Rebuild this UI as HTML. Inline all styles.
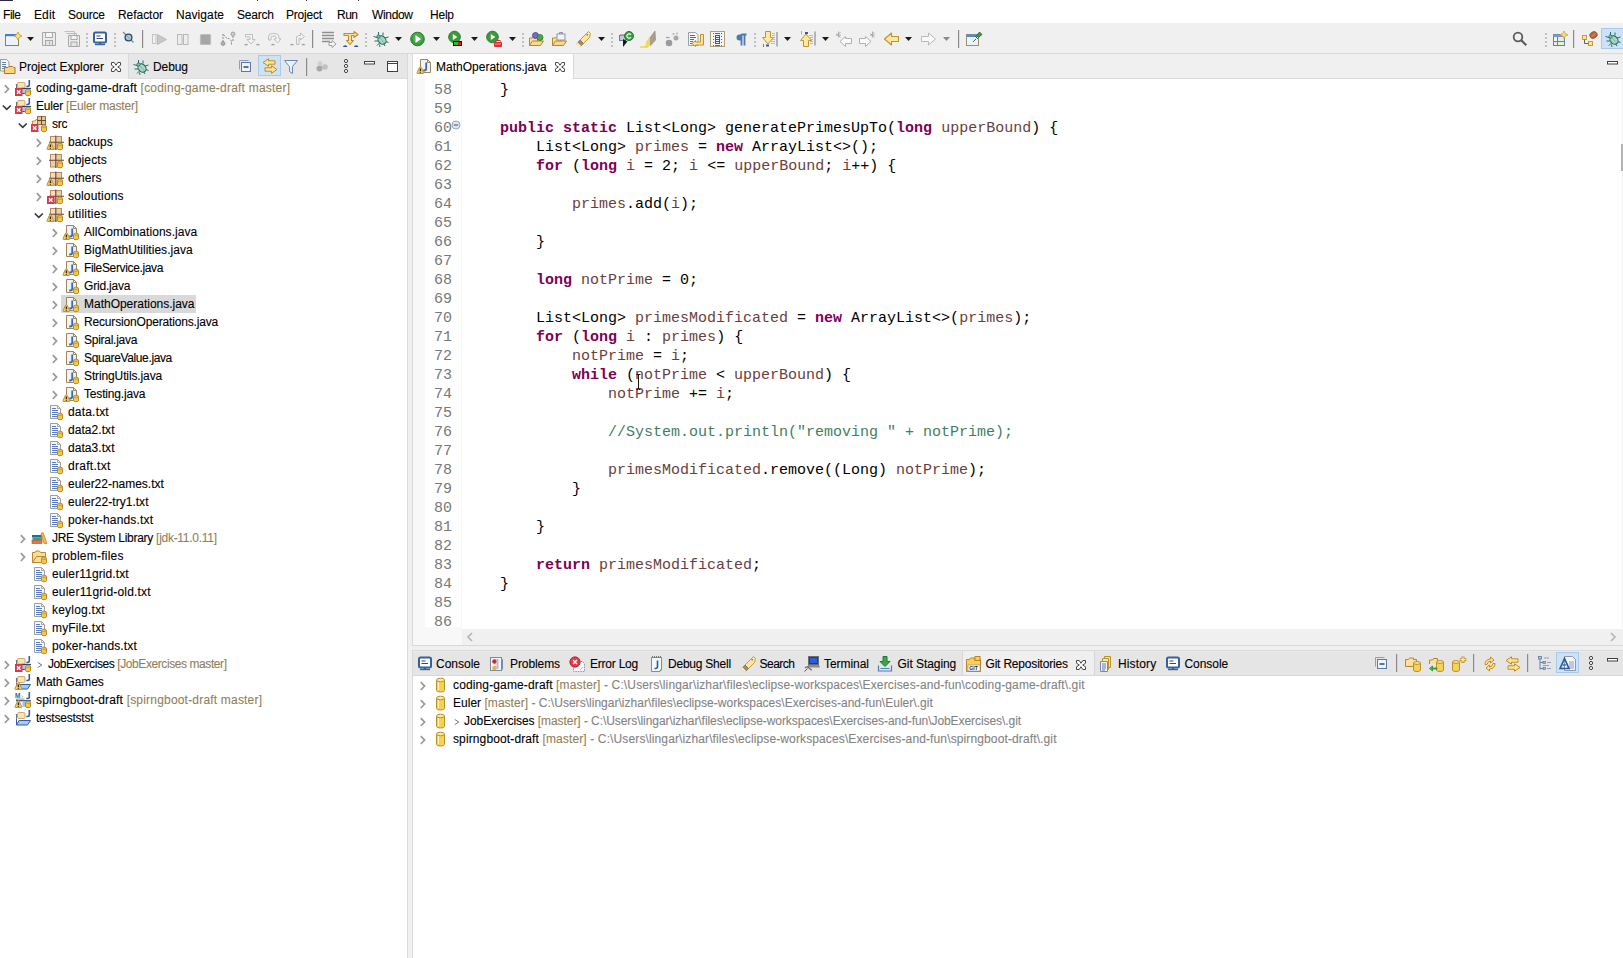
<!DOCTYPE html><html><head><meta charset="utf-8"><style>
*{margin:0;padding:0;box-sizing:border-box}
html,body{width:1623px;height:958px;overflow:hidden;background:#fff;font-family:"Liberation Sans",sans-serif;font-size:12px;color:#000}
.a{position:absolute}
.t{position:absolute;white-space:pre;line-height:18px;height:18px;-webkit-text-stroke:0.1px currentColor}
.code{position:absolute;white-space:pre;font-family:"Liberation Mono",monospace;font-size:15px;line-height:19px;height:19px}
.k{color:#7f0055;font-weight:bold}
.v{color:#6a3e3e}
.c{color:#3f7f5f}
.ln{position:absolute;white-space:pre;font-family:"Liberation Mono",monospace;font-size:15px;line-height:19px;height:19px;color:#787878;text-align:right;width:40px}
svg{position:absolute;overflow:visible}
</style></head><body>
<div class="a" style="left:0px;top:0px;width:1623px;height:23px;background:#fff"></div>
<div class="a" style="left:0px;top:0px;width:13px;height:1px;background:#2a2a40"></div>
<div class="a" style="left:257px;top:0px;width:1px;height:1px;background:#333"></div>
<div class="a" style="left:306px;top:0px;width:1px;height:1px;background:#333"></div>
<div class="a" style="left:358px;top:0px;width:1px;height:1px;background:#333"></div>
<div class="t" style="left:3px;top:6px;letter-spacing:-0.448px;">File</div>
<div class="t" style="left:34px;top:6px;letter-spacing:0.104px;">Edit</div>
<div class="t" style="left:68px;top:6px;letter-spacing:-0.206px;">Source</div>
<div class="t" style="left:118px;top:6px;letter-spacing:-0.051px;">Refactor</div>
<div class="t" style="left:176px;top:6px;letter-spacing:0.089px;">Navigate</div>
<div class="t" style="left:237px;top:6px;letter-spacing:-0.206px;">Search</div>
<div class="t" style="left:286px;top:6px;letter-spacing:-0.227px;">Project</div>
<div class="t" style="left:337px;top:6px;letter-spacing:-0.508px;">Run</div>
<div class="t" style="left:372px;top:6px;letter-spacing:-0.338px;">Window</div>
<div class="t" style="left:430px;top:6px;letter-spacing:-0.229px;">Help</div>
<div class="a" style="left:0px;top:23px;width:1623px;height:31px;background:#f0f0f0;border-bottom:1px solid #d9d9d9"></div>
<div class="a" style="left:0px;top:54px;width:408px;height:904px;background:#fff;border-right:1px solid #d9d9d9"></div>
<div class="a" style="left:0px;top:54px;width:407px;height:25px;background:#e6e6e6;border-bottom:1px solid #dcdcdc"></div>
<div class="a" style="left:0px;top:54px;width:129px;height:25px;background:#efefef;border-right:1px solid #dadada"></div>
<div class="a" style="left:408px;top:54px;width:4px;height:904px;background:#f0f0f0"></div>
<div class="a" style="left:412px;top:54px;width:1211px;height:592px;background:#fff;border-left:1px solid #d9d9d9;border-bottom:1px solid #d9d9d9"></div>
<div class="a" style="left:413px;top:54px;width:1210px;height:25px;background:#f0f0f0;border-bottom:1px solid #d9d9d9"></div>
<div class="a" style="left:413px;top:54px;width:161px;height:25px;background:#fff;border-right:1px solid #d9d9d9"></div>
<div class="a" style="left:413px;top:79px;width:12px;height:566px;background:#f8f8f8"></div>
<div class="a" style="left:425px;top:627px;width:37px;height:18px;background:#f8f8f8"></div>
<div class="a" style="left:461px;top:79px;width:1px;height:548px;background:#f6f6f6"></div>
<div class="a" style="left:462px;top:629px;width:1161px;height:16px;background:#f0f0f0"></div>
<div class="a" style="left:461px;top:627px;width:1px;height:18px;background:#f8f8f8"></div>
<div class="a" style="left:1622px;top:79px;width:1px;height:549px;background:#f2f2f2"></div>
<div class="a" style="left:1621px;top:144px;width:2px;height:27px;background:#b4b4b4"></div>
<div class="a" style="left:412px;top:646px;width:1211px;height:4px;background:#f0f0f0"></div>
<div class="a" style="left:412px;top:650px;width:1211px;height:308px;background:#fff;border-left:1px solid #d9d9d9;border-top:1px solid #d9d9d9"></div>
<div class="a" style="left:413px;top:651px;width:1210px;height:25px;background:#e5e5e5;border-top:1px solid #ececec;border-bottom:1px solid #d9d9d9"></div>
<div class="a" style="left:962px;top:651px;width:133px;height:24px;background:#efefef;border-left:1px solid #d6d6d6;border-right:1px solid #d6d6d6"></div>
<div class="t" style="left:19px;top:58px;letter-spacing:-0.025px;">Project Explorer</div>
<div class="t" style="left:153px;top:58px;letter-spacing:-0.094px;">Debug</div>
<div class="a" style="left:61px;top:295px;width:135px;height:18px;background:#d9d9d9"></div>
<div class="t" style="left:36px;top:79px;letter-spacing:0.214px;">coding-game-draft<span style="color:#927f5a"> [coding-game-draft master]</span></div>
<div class="t" style="left:36px;top:97px;letter-spacing:-0.213px;">Euler<span style="color:#927f5a"> [Euler master]</span></div>
<div class="t" style="left:52px;top:115px;letter-spacing:-0.200px;">src</div>
<div class="t" style="left:68px;top:133px;letter-spacing:-0.001px;">backups</div>
<div class="t" style="left:68px;top:151px;letter-spacing:0.111px;">objects</div>
<div class="t" style="left:68px;top:169px;letter-spacing:0.008px;">others</div>
<div class="t" style="left:68px;top:187px;letter-spacing:0.173px;">soloutions</div>
<div class="t" style="left:68px;top:205px;letter-spacing:0.252px;">utilities</div>
<div class="t" style="left:84px;top:223px;letter-spacing:0.065px;">AllCombinations.java</div>
<div class="t" style="left:84px;top:241px;letter-spacing:0.028px;">BigMathUtilities.java</div>
<div class="t" style="left:84px;top:259px;letter-spacing:-0.354px;">FileService.java</div>
<div class="t" style="left:84px;top:277px;letter-spacing:-0.191px;">Grid.java</div>
<div class="t" style="left:84px;top:295px;letter-spacing:-0.013px;">MathOperations.java</div>
<div class="t" style="left:84px;top:313px;letter-spacing:-0.164px;">RecursionOperations.java</div>
<div class="t" style="left:84px;top:331px;letter-spacing:-0.263px;">Spiral.java</div>
<div class="t" style="left:84px;top:349px;letter-spacing:-0.370px;">SquareValue.java</div>
<div class="t" style="left:84px;top:367px;letter-spacing:-0.122px;">StringUtils.java</div>
<div class="t" style="left:84px;top:385px;letter-spacing:-0.170px;">Testing.java</div>
<div class="t" style="left:68px;top:403px;letter-spacing:0.192px;">data.txt</div>
<div class="t" style="left:68px;top:421px;letter-spacing:0.059px;">data2.txt</div>
<div class="t" style="left:68px;top:439px;letter-spacing:0.059px;">data3.txt</div>
<div class="t" style="left:68px;top:457px;letter-spacing:0.286px;">draft.txt</div>
<div class="t" style="left:68px;top:475px;letter-spacing:-0.015px;">euler22-names.txt</div>
<div class="t" style="left:68px;top:493px;letter-spacing:0.030px;">euler22-try1.txt</div>
<div class="t" style="left:68px;top:511px;letter-spacing:0.163px;">poker-hands.txt</div>
<div class="t" style="left:52px;top:529px;letter-spacing:-0.278px;">JRE System Library<span style="color:#927f5a"> [jdk-11.0.11]</span></div>
<div class="t" style="left:52px;top:547px;letter-spacing:0.233px;">problem-files</div>
<div class="t" style="left:52px;top:565px;letter-spacing:0.110px;">euler11grid.txt</div>
<div class="t" style="left:52px;top:583px;letter-spacing:0.190px;">euler11grid-old.txt</div>
<div class="t" style="left:52px;top:601px;letter-spacing:0.222px;">keylog.txt</div>
<div class="t" style="left:52px;top:619px;letter-spacing:0.151px;">myFile.txt</div>
<div class="t" style="left:52px;top:637px;letter-spacing:0.149px;">poker-hands.txt</div>
<svg style="left:37px;top:661px" width="6" height="8" viewBox="0 0 6 8"><path d="M0.8 1.5l4 2.5-4 2.5" fill="none" stroke="#777" stroke-width="1"/></svg>
<div class="t" style="left:48px;top:655px;letter-spacing:-0.416px;">JobExercises<span style="color:#927f5a"> [JobExercises master]</span></div>
<div class="t" style="left:36px;top:673px;letter-spacing:-0.111px;">Math Games</div>
<div class="t" style="left:36px;top:691px;letter-spacing:0.192px;">spirngboot-draft<span style="color:#927f5a"> [spirngboot-draft master]</span></div>
<div class="t" style="left:36px;top:709px;letter-spacing:-0.221px;">testseststst</div>
<div class="t" style="left:436px;top:58px;letter-spacing:0.004px;">MathOperations.java</div>
<div class="ln" style="left:412px;top:81px">58</div>
<div class="code" style="left:464px;top:81px;color:#000">    }</div>
<div class="ln" style="left:412px;top:100px">59</div>
<div class="ln" style="left:412px;top:119px">60</div>
<div class="code" style="left:464px;top:119px;color:#000">    <span class="k">public</span> <span class="k">static</span> List&lt;Long&gt; generatePrimesUpTo(<span class="k">long</span> <span class="v">upperBound</span>) {</div>
<div class="ln" style="left:412px;top:138px">61</div>
<div class="code" style="left:464px;top:138px;color:#000">        List&lt;Long&gt; <span class="v">primes</span> = <span class="k">new</span> ArrayList&lt;&gt;();</div>
<div class="ln" style="left:412px;top:157px">62</div>
<div class="code" style="left:464px;top:157px;color:#000">        <span class="k">for</span> (<span class="k">long</span> <span class="v">i</span> = 2; <span class="v">i</span> &lt;= <span class="v">upperBound</span>; <span class="v">i</span>++) {</div>
<div class="ln" style="left:412px;top:176px">63</div>
<div class="ln" style="left:412px;top:195px">64</div>
<div class="code" style="left:464px;top:195px;color:#000">            <span class="v">primes</span>.add(<span class="v">i</span>);</div>
<div class="ln" style="left:412px;top:214px">65</div>
<div class="ln" style="left:412px;top:233px">66</div>
<div class="code" style="left:464px;top:233px;color:#000">        }</div>
<div class="ln" style="left:412px;top:252px">67</div>
<div class="ln" style="left:412px;top:271px">68</div>
<div class="code" style="left:464px;top:271px;color:#000">        <span class="k">long</span> <span class="v">notPrime</span> = 0;</div>
<div class="ln" style="left:412px;top:290px">69</div>
<div class="ln" style="left:412px;top:309px">70</div>
<div class="code" style="left:464px;top:309px;color:#000">        List&lt;Long&gt; <span class="v">primesModificated</span> = <span class="k">new</span> ArrayList&lt;&gt;(<span class="v">primes</span>);</div>
<div class="ln" style="left:412px;top:328px">71</div>
<div class="code" style="left:464px;top:328px;color:#000">        <span class="k">for</span> (<span class="k">long</span> <span class="v">i</span> : <span class="v">primes</span>) {</div>
<div class="ln" style="left:412px;top:347px">72</div>
<div class="code" style="left:464px;top:347px;color:#000">            <span class="v">notPrime</span> = <span class="v">i</span>;</div>
<div class="ln" style="left:412px;top:366px">73</div>
<div class="code" style="left:464px;top:366px;color:#000">            <span class="k">while</span> (<span class="v">notPrime</span> &lt; <span class="v">upperBound</span>) {</div>
<div class="ln" style="left:412px;top:385px">74</div>
<div class="code" style="left:464px;top:385px;color:#000">                <span class="v">notPrime</span> += <span class="v">i</span>;</div>
<div class="ln" style="left:412px;top:404px">75</div>
<div class="ln" style="left:412px;top:423px">76</div>
<div class="code" style="left:464px;top:423px;color:#000">                <span class="c">//System.out.println(&quot;removing &quot; + notPrime);</span></div>
<div class="ln" style="left:412px;top:442px">77</div>
<div class="ln" style="left:412px;top:461px">78</div>
<div class="code" style="left:464px;top:461px;color:#000">                <span class="v">primesModificated</span>.remove((Long) <span class="v">notPrime</span>);</div>
<div class="ln" style="left:412px;top:480px">79</div>
<div class="code" style="left:464px;top:480px;color:#000">            }</div>
<div class="ln" style="left:412px;top:499px">80</div>
<div class="ln" style="left:412px;top:518px">81</div>
<div class="code" style="left:464px;top:518px;color:#000">        }</div>
<div class="ln" style="left:412px;top:537px">82</div>
<div class="ln" style="left:412px;top:556px">83</div>
<div class="code" style="left:464px;top:556px;color:#000">        <span class="k">return</span> <span class="v">primesModificated</span>;</div>
<div class="ln" style="left:412px;top:575px">84</div>
<div class="code" style="left:464px;top:575px;color:#000">    }</div>
<div class="ln" style="left:412px;top:594px">85</div>
<div class="ln" style="left:412px;top:613px">86</div>
<svg style="left:634px;top:373px" width="9" height="18" viewBox="0 0 9 18"><path d="M2.5 1.5h1.5M5 1.5h1.5M4.5 1v15.5M2.5 16.5h1.5M5 16.5h1.5" fill="none" stroke="#111" stroke-width="1"/></svg>
<div class="t" style="left:436px;top:655px;letter-spacing:-0.005px;">Console</div>
<div class="t" style="left:510px;top:655px;letter-spacing:-0.084px;">Problems</div>
<div class="t" style="left:590px;top:655px;letter-spacing:-0.229px;">Error Log</div>
<div class="t" style="left:668px;top:655px;letter-spacing:-0.229px;">Debug Shell</div>
<div class="t" style="left:759.5px;top:655px;letter-spacing:-0.526px;">Search</div>
<div class="t" style="left:824px;top:655px;letter-spacing:-0.051px;">Terminal</div>
<div class="t" style="left:897.5px;top:655px;letter-spacing:-0.058px;">Git Staging</div>
<div class="t" style="left:985.5px;top:655px;letter-spacing:-0.192px;">Git Repositories</div>
<div class="t" style="left:1118px;top:655px;letter-spacing:0.143px;">History</div>
<div class="t" style="left:1184.5px;top:655px;letter-spacing:-0.055px;">Console</div>
<div class="t" style="left:453px;top:676px;letter-spacing:0.133px;">coding-game-draft<span style="color:#927f5a"> [master]</span><span style="color:#838383"> - C:\Users\lingar\izhar\files\eclipse-workspaces\Exercises-and-fun\coding-game-draft\.git</span></div>
<div class="t" style="left:453px;top:694px;letter-spacing:0.025px;">Euler<span style="color:#927f5a"> [master]</span><span style="color:#838383"> - C:\Users\lingar\izhar\files\eclipse-workspaces\Exercises-and-fun\Euler\.git</span></div>
<svg style="left:454px;top:718px" width="6" height="8" viewBox="0 0 6 8"><path d="M0.8 1.5l4 2.5-4 2.5" fill="none" stroke="#777" stroke-width="1"/></svg>
<div class="t" style="left:464px;top:712px;letter-spacing:-0.068px;">JobExercises<span style="color:#927f5a"> [master]</span><span style="color:#838383"> - C:\Users\lingar\izhar\files\eclipse-workspaces\Exercises-and-fun\JobExercises\.git</span></div>
<div class="t" style="left:453px;top:730px;letter-spacing:0.123px;">spirngboot-draft<span style="color:#927f5a"> [master]</span><span style="color:#838383"> - C:\Users\lingar\izhar\files\eclipse-workspaces\Exercises-and-fun\spirngboot-draft\.git</span></div>
<svg style="left:4px;top:31px" width="16" height="16" viewBox="0 0 16 16"><rect x="1.5" y="3.5" width="13" height="11" fill="#eef4fb" stroke="#8a8060"/><rect x="1" y="3" width="13" height="2.2" fill="#4a7cc0"/><path d="M14 1l1.4 2.6 2.6 1.4-2.6 1.4L14 9l-1.4-2.6L10 5l2.6-1.4z" fill="#fde070" stroke="#b89a3a" stroke-width=".8"/></svg>
<svg style="left:41px;top:31px" width="16" height="16" viewBox="0 0 16 16"><path d="M1.5 1.5h13v13h-13z" fill="#ececec" stroke="#a8a8a8" stroke-linejoin="round"/><rect x="4.5" y="1.5" width="7" height="5" fill="#f4f4f4" stroke="#a8a8a8"/><rect x="4.5" y="9.5" width="7" height="5" fill="#e4e4e4" stroke="#a8a8a8"/><path d="M8.5 10.5v3" stroke="#a8a8a8"/></svg>
<svg style="left:64px;top:31px" width="16" height="16" viewBox="0 0 16 16"><path d="M0.5 0.5h10v10" fill="none" stroke="#c0c0c0"/><path d="M2.5 2.5h10v10" fill="none" stroke="#b8b8b8"/><path d="M4.5 4.5h11v11h-11z" fill="#ececec" stroke="#a8a8a8"/><rect x="7" y="4.5" width="6" height="4" fill="#f4f4f4" stroke="#a8a8a8"/><rect x="7" y="11" width="6" height="4.5" fill="#e4e4e4" stroke="#a8a8a8"/></svg>
<svg style="left:93px;top:31px" width="16" height="16" viewBox="0 0 16 16"><rect x="1" y="1.5" width="12" height="10" rx="1.5" fill="#fff" stroke="#36609e" stroke-width="2"/><path d="M3.5 5h4M3.5 7.5h6.5" stroke="#2a4a7e" stroke-width="1.1"/><path d="M2 13.5h10" stroke="#36609e" stroke-width="1.4"/><rect x="6" y="11.5" width="2" height="2" fill="#36609e"/></svg>
<svg style="left:122px;top:31px" width="16" height="16" viewBox="0 0 16 16"><path d="M1 1l10.5 10.5" stroke="#7a8a96" stroke-width="1.2"/><circle cx="6.5" cy="6.5" r="3.4" fill="#a8c8e0" stroke="#2e4a66" stroke-width="1.3"/><path d="M4 4l5 5" stroke="#8aa0b0" stroke-width=".8"/></svg>
<svg style="left:151px;top:31px" width="16" height="16" viewBox="0 0 16 16"><rect x="1.5" y="3.5" width="3.5" height="9" fill="#f0f0f0" stroke="#c4c4c4"/><path d="M6.5 3.5l9 5-9 5z" fill="#c8c8c8" stroke="#bcbcbc" stroke-linejoin="round"/></svg>
<svg style="left:176px;top:31px" width="16" height="16" viewBox="0 0 16 16"><rect x="1.5" y="3.5" width="4.5" height="10" fill="#eeeeee" stroke="#b8b8b8"/><rect x="7.5" y="3.5" width="4.5" height="10" fill="#eeeeee" stroke="#b8b8b8"/></svg>
<svg style="left:199px;top:31px" width="16" height="16" viewBox="0 0 16 16"><rect x="1.5" y="3.5" width="10" height="10" rx="1" fill="#a6a6a6" stroke="#bdbdbd" stroke-width="1.2"/></svg>
<svg style="left:220px;top:31px" width="16" height="16" viewBox="0 0 16 16"><circle cx="3" cy="12.5" r="2" fill="#b0b0b0" stroke="#909090" stroke-width=".8"/><circle cx="13" cy="3" r="2" fill="#d0d0d0" stroke="#909090" stroke-width=".8"/><path d="M3 11V3l4 4.5h2l2.5 2.5v3.5M13 5v5" fill="none" stroke="#8a8a8a" stroke-width="1" stroke-dasharray="2 1"/></svg>
<svg style="left:244px;top:31px" width="16" height="16" viewBox="0 0 16 16"><path d="M1.5 3.5h7v5h2.5l-4 4.5-4-4.5H6v-2.5H1.5z" fill="#f4f4f4" stroke="#bdbdbd" stroke-linejoin="round"/><path d="M0.2 14.3a1.9 1.5 0 0 1 3.8 0z" fill="#9c9c9c"/><path d="M12 14.3a1.9 1.5 0 0 1 3.8 0z" fill="#9c9c9c"/></svg>
<svg style="left:267px;top:31px" width="16" height="16" viewBox="0 0 16 16"><path d="M1.5 9V6q0-3.5 4-3.5h2.5q4 0 4 3.5v2h2l-3.5 4-3.5-4h2v-2q0-1-1-1H6q-2 0-2 2V9z" fill="#f4f4f4" stroke="#bdbdbd" stroke-linejoin="round"/><path d="M4 14.3a1.9 1.5 0 0 1 3.8 0z" fill="#9c9c9c"/></svg>
<svg style="left:290px;top:31px" width="16" height="16" viewBox="0 0 16 16"><path d="M6.5 13.5V7q0-2.5 2.5-2.5h1.5V2l4 3.5-4 3.5V7H9.5q-.5 0-.5.5v6z" fill="#f4f4f4" stroke="#bdbdbd" stroke-linejoin="round"/><path d="M0 14.3a1.9 1.5 0 0 1 3.8 0z" fill="#9c9c9c"/><path d="M11.5 14.3a1.9 1.5 0 0 1 3.8 0z" fill="#9c9c9c"/></svg>
<svg style="left:321px;top:31px" width="16" height="16" viewBox="0 0 16 16"><path d="M1 1.5h12M1 4.5h12M1 7.5h12M1 10.5h8" stroke="#8e8e8e" stroke-width="1.6"/><path d="M8 11.5h3v-2l4 3.5-4 3.5v-2H8z" fill="#f6f6f6" stroke="#a0a0a0" stroke-linejoin="round"/></svg>
<svg style="left:343px;top:31px" width="16" height="16" viewBox="0 0 16 16"><path d="M1 2.5h10V0.5l4 3-4 3V4.5H8.5v5h2l-3.5 4-3.5-4h2v-5H1z" fill="#fde29a" stroke="#c48a28" stroke-linejoin="round" stroke-width="1.1"/><path d="M0 16a2.2 1.8 0 0 1 4.4 0zM11 16a2.2 1.8 0 0 1 4.4 0z" fill="#35598a"/></svg>
<svg style="left:373px;top:31px" width="16" height="16" viewBox="0 0 16 16"><path d="M5.5 1v3.5M10 1.5v3M0.5 5.5l4 1.2M15.5 6l-3.5 1M1.5 10h3.5M15.5 11.5l-3-1M4 14.5l2.5-2.5M12 15l-1.5-2.5M6.5 13.5l.5 2.5" stroke="#2a6a6a" stroke-width="1"/><ellipse cx="9" cy="9" rx="3.6" ry="4.6" transform="rotate(-40 9 9)" fill="#a8d8c0" stroke="#2a6a6a" stroke-width="1.1"/><path d="M7 7l4 4.5" stroke="#7ab8a0" stroke-width="1"/><circle cx="5.5" cy="5.5" r="1.6" fill="#8ac8b0" stroke="#2a6a6a" stroke-width=".9"/></svg>
<svg style="left:410px;top:31px" width="16" height="16" viewBox="0 0 16 16"><circle cx="7.5" cy="8" r="6.8" fill="#3a9a3e" stroke="#2a7a2e" stroke-width="1"/><circle cx="7.5" cy="7" r="5" fill="#58b85a" opacity=".6"/><path d="M5.5 4l5.5 4-5.5 4z" fill="#fff"/></svg>
<svg style="left:448px;top:31px" width="16" height="16" viewBox="0 0 16 16"><circle cx="6.5" cy="6" r="5.8" fill="#3a9a3e" stroke="#2a7a2e"/><path d="M4.8 3l4.5 3-4.5 3z" fill="#fff"/><rect x="5" y="10" width="9" height="5" fill="#111"/><rect x="6" y="11" width="4" height="3" fill="#22c030"/><rect x="10" y="11" width="3" height="3" fill="#d82020"/></svg>
<svg style="left:486px;top:31px" width="16" height="16" viewBox="0 0 16 16"><circle cx="6.5" cy="6" r="5.8" fill="#3a9a3e" stroke="#2a7a2e"/><path d="M4.8 3l4.5 3-4.5 3z" fill="#fff"/><rect x="8" y="11" width="8" height="5" rx="1" fill="#d8323a"/><rect x="10" y="9.5" width="4" height="2" fill="none" stroke="#d8323a"/><path d="M9 13h6" stroke="#ffb0b0" stroke-width=".8"/></svg>
<svg style="left:528px;top:31px" width="16" height="16" viewBox="0 0 16 16"><path d="M1.5 14.5V7h3l1-1h4v8.5z" fill="#fbe0a0" stroke="#b8852c"/><path d="M1.5 14.5l3-4.5h11l-3 4.5z" fill="#fcd98a" stroke="#b8852c"/><circle cx="7.5" cy="4.5" r="3" fill="#7a6ac8" stroke="#4a3a98" stroke-width=".8"/><circle cx="12" cy="6.5" r="3" fill="#4aaa4a" stroke="#2a7a2a" stroke-width=".8"/></svg>
<svg style="left:551px;top:31px" width="16" height="16" viewBox="0 0 16 16"><path d="M1.5 14.5V7h3l1-1h4v8.5z" fill="#fbe0a0" stroke="#b8852c"/><rect x="6" y="3" width="8" height="6" fill="#f0f4fa" stroke="#8a98a8"/><path d="M8.5 3V1.5h3V3" fill="#a0b0c0" stroke="#8a98a8"/><path d="M1.5 14.5l3-4.5h11l-3 4.5z" fill="#fcd98a" stroke="#b8852c"/></svg>
<svg style="left:575px;top:31px" width="16" height="16" viewBox="0 0 16 16"><path d="M13.5 0.5l2 2-1 4-6 6-3.5-3.5 6-6z" fill="#fbe6a0" stroke="#c89a40"/><path d="M5 9l3.5 3.5-2.5 2.5L2.5 11.5z" fill="#a08878" stroke="#806050" stroke-width=".6"/><path d="M2.5 11.5L6 15l-1.5 1L1 13z" fill="#fff5c0" stroke="#e0d090" stroke-width=".6"/><circle cx="12.2" cy="3.8" r=".8" fill="#806040"/></svg>
<svg style="left:618px;top:31px" width="16" height="16" viewBox="0 0 16 16"><rect x="1.5" y="4.5" width="6" height="5" fill="#b8cce0" stroke="#6a7a8a"/><path d="M2 4.5h6V3H2z" fill="#d0a0a0"/><path d="M5 8v8l4.5-5.5z" fill="#1a1a1a"/><circle cx="11" cy="5" r="4.5" fill="#3aa04a" stroke="#1e7a2e"/><path d="M12.8 3.6a2.2 2.2 0 1 0 0 2.8" fill="none" stroke="#fff" stroke-width="1.2"/></svg>
<svg style="left:640px;top:31px" width="16" height="16" viewBox="0 0 16 16"><path d="M15 0l0.5 9-5 5.5-4-3z" fill="#a8a088" stroke="#8a8268" stroke-width=".6"/><path d="M6.5 11.5l4 3-2 1.5H4.5z" fill="#f2e050"/><path d="M0 16h8" stroke="#e0d040" stroke-width="1.2"/><path d="M10 4.5l-4 7 4 3" fill="#f0e058" opacity=".9"/></svg>
<svg style="left:665px;top:31px" width="16" height="16" viewBox="0 0 16 16"><circle cx="4" cy="12" r="3.3" fill="#9a9a9a"/><path d="M1 6.5h3.5" stroke="#a0a0a0" stroke-width="1.2"/><circle cx="11" cy="7" r="2.5" fill="#a8a8a8"/><circle cx="8.5" cy="3" r="1" fill="#b0b0b0"/><circle cx="12" cy="2.5" r=".9" fill="#b0b0b0"/></svg>
<svg style="left:687px;top:31px" width="16" height="16" viewBox="0 0 16 16"><path d="M1.5 1.5h7l2.5 2.5v10.5h-9.5z" fill="#f4f6fa" stroke="#98a0a8"/><path d="M3 4.5h5M3 6.5h6M3 8.5h4M3 10.5h3M3 12.5h3" stroke="#4a70b0"/><path d="M13.5 3.5v7.5H8.5V9.5L5 12.5l3.5 3v-1.5h8V3.5z" fill="#fde69a" stroke="#c89028" stroke-width="1" stroke-linejoin="round"/></svg>
<svg style="left:710px;top:31px" width="16" height="16" viewBox="0 0 16 16"><rect x="0.5" y="0.5" width="14" height="15" fill="#f2f6fb" stroke="#b0a078"/><path d="M3 2.5h1M3 5.5h1M3 8.5h1M3 11.5h1M3 14.5h1M11 2.5h1M11 5.5h1M11 8.5h1M11 11.5h1M11 14.5h1" stroke="#4a6aa0"/><path d="M5 2.5h5M5 14.5h5" stroke="#4a6aa0"/><rect x="5.5" y="4.5" width="4" height="8" fill="none" stroke="#3a5a90"/><path d="M5.5 6.5h4M5.5 8.5h4M5.5 10.5h4" stroke="#3a5a90"/></svg>
<svg style="left:734px;top:31px" width="16" height="16" viewBox="0 0 16 16"><path d="M7 3.5H5.5a3 3 0 0 0 0 6H7z" fill="#4a78b0"/><path d="M7.5 3.5h5M7.5 3v11.5M10.5 3v11.5" stroke="#4a78b0" stroke-width="1.8"/></svg>
<svg style="left:762px;top:31px" width="16" height="16" viewBox="0 0 16 16"><path d="M3.5 0.5h5v6h3l-5.5 6.5L0.5 6.5h3z" fill="#fde9a0" stroke="#c89028" stroke-linejoin="round"/><path d="M10 2.5h3M10 4.5h3M10 6.5h3M10 8.5h3M9 10.5h4M9 12.5h4" stroke="#9ab0d0" stroke-width=".8"/><path d="M15 1v14.5" stroke="#6a7a90" stroke-width="1"/><rect x="4" y="13.5" width="3" height="2" fill="#3a5aa0"/><path d="M1.5 13v3" stroke="#6a7a90"/></svg>
<svg style="left:800px;top:31px" width="16" height="16" viewBox="0 0 16 16"><path d="M3.5 15.5h5v-6h3L6 3 0.5 9.5h3z" fill="#fde9a0" stroke="#c89028" stroke-linejoin="round"/><path d="M9 4.5h4M10 6.5h3M10 8.5h3M10 10.5h3M10 12.5h3" stroke="#9ab0d0" stroke-width=".8"/><path d="M15 0.5v14" stroke="#6a7a90"/><rect x="5" y="1" width="3" height="2" fill="#3a5aa0"/><path d="M1.5 0v3.5" stroke="#b0b0a0"/></svg>
<svg style="left:836px;top:31px" width="16" height="16" viewBox="0 0 16 16"><path d="M15.5 7.5v5H9.5v3l-5.5-5 5.5-5v2z" fill="#fafafa" stroke="#b0b0b0" stroke-linejoin="round"/><path d="M0.5 2.5l4 4M2.5 0.5v6M0 4h5M4.5 1l-4 4" stroke="#a8a8a8" stroke-width=".9"/></svg>
<svg style="left:859px;top:31px" width="16" height="16" viewBox="0 0 16 16"><path d="M0.5 7.5v5h6v3l5.5-5-5.5-5v2z" fill="#fafafa" stroke="#b0b0b0" stroke-linejoin="round"/><path d="M11.5 2.5l4 4M13.5 0.5v6M11 4h5M15.5 1l-4 4" stroke="#a8a8a8" stroke-width=".9"/></svg>
<svg style="left:883px;top:31px" width="16" height="16" viewBox="0 0 16 16"><path d="M15.5 5.5v5h-7v3.5l-7-6 7-6v3.5z" fill="#fde9a6" stroke="#c89028" stroke-linejoin="round" stroke-width="1.1"/></svg>
<svg style="left:921px;top:31px" width="16" height="16" viewBox="0 0 16 16"><path d="M0.5 5.5v5h7v3.5l7-6-7-6v3.5z" fill="#fafafa" stroke="#b8b8b8" stroke-linejoin="round"/></svg>
<svg style="left:966px;top:31px" width="16" height="16" viewBox="0 0 16 16"><rect x="0.5" y="3.5" width="12" height="11" fill="#eaf4fc" stroke="#9a9070"/><rect x="0.5" y="3.5" width="12" height="2.5" fill="#5a88c8"/><path d="M7 11l3-3" stroke="#506060" stroke-width="1"/><path d="M10.5 4.5l3-3.5 2.5 2.5-3.5 3z" fill="#3a9a3a" stroke="#1e6a2e" stroke-width=".8"/><path d="M9 5l3 3" stroke="#1e6a2e"/></svg>
<svg style="left:1512px;top:31px" width="16" height="16" viewBox="0 0 16 16"><circle cx="6" cy="6" r="4.3" fill="none" stroke="#5a5a5a" stroke-width="1.8"/><path d="M9.3 9.3l5 5" stroke="#5a5a5a" stroke-width="2.2"/></svg>
<svg style="left:1552px;top:31px" width="16" height="16" viewBox="0 0 16 16"><rect x="1.5" y="3.5" width="11" height="11" fill="#e6eedc" stroke="#6a80a0"/><rect x="1.5" y="3.5" width="11" height="2.5" fill="#7a9ac8"/><path d="M5.5 6v8.5M1.5 10.5h11" stroke="#6a80a0"/><rect x="2" y="6.5" width="3" height="3.5" fill="#f4f8fc"/><path d="M12 0l1.2 2.6 2.8 1.2-2.8 1.2L12 7.6l-1.2-2.6L8 3.8l2.8-1.2z" fill="#fde070" stroke="#c8a040" stroke-width=".8"/></svg>
<svg style="left:1582px;top:31px" width="16" height="16" viewBox="0 0 16 16"><rect x="0.5" y="4.5" width="4" height="4" fill="#fde49a" stroke="#c89a3a"/><rect x="6.5" y="10.5" width="4" height="4" fill="#fde49a" stroke="#c89a3a"/><path d="M2.5 8.5v4h4" fill="none" stroke="#706050"/><ellipse cx="11.5" cy="4" rx="3.8" ry="3.2" transform="rotate(-30 11.5 4)" fill="#b86a3a" stroke="#8a4a2a" stroke-width=".8"/><path d="M9.5 5.5q2-1 4-3" stroke="#e09a60" stroke-width=".8" fill="none"/></svg>
<svg style="left:27px;top:37px" width="7" height="4" viewBox="0 0 7 4"><path d="M0 0h7l-3.5 4z" fill="#1a1a1a"/></svg>
<svg style="left:395px;top:37px" width="7" height="4" viewBox="0 0 7 4"><path d="M0 0h7l-3.5 4z" fill="#1a1a1a"/></svg>
<svg style="left:433px;top:37px" width="7" height="4" viewBox="0 0 7 4"><path d="M0 0h7l-3.5 4z" fill="#1a1a1a"/></svg>
<svg style="left:471px;top:37px" width="7" height="4" viewBox="0 0 7 4"><path d="M0 0h7l-3.5 4z" fill="#1a1a1a"/></svg>
<svg style="left:509px;top:37px" width="7" height="4" viewBox="0 0 7 4"><path d="M0 0h7l-3.5 4z" fill="#1a1a1a"/></svg>
<svg style="left:598px;top:37px" width="7" height="4" viewBox="0 0 7 4"><path d="M0 0h7l-3.5 4z" fill="#1a1a1a"/></svg>
<svg style="left:784px;top:37px" width="7" height="4" viewBox="0 0 7 4"><path d="M0 0h7l-3.5 4z" fill="#1a1a1a"/></svg>
<svg style="left:822px;top:37px" width="7" height="4" viewBox="0 0 7 4"><path d="M0 0h7l-3.5 4z" fill="#1a1a1a"/></svg>
<svg style="left:905px;top:37px" width="7" height="4" viewBox="0 0 7 4"><path d="M0 0h7l-3.5 4z" fill="#1a1a1a"/></svg>
<svg style="left:943px;top:37px" width="7" height="4" viewBox="0 0 7 4"><path d="M0 0h7l-3.5 4z" fill="#8a8a8a"/></svg>
<svg style="left:86px;top:31px" width="2" height="16" viewBox="0 0 2 16"><rect x="0" y="2" width="2" height="2" fill="#c2c2c2"/><rect x="0" y="6" width="2" height="2" fill="#c2c2c2"/><rect x="0" y="10" width="2" height="2" fill="#c2c2c2"/><rect x="0" y="14" width="2" height="2" fill="#c2c2c2"/></svg>
<svg style="left:114px;top:31px" width="2" height="16" viewBox="0 0 2 16"><rect x="0" y="2" width="2" height="2" fill="#c2c2c2"/><rect x="0" y="6" width="2" height="2" fill="#c2c2c2"/><rect x="0" y="10" width="2" height="2" fill="#c2c2c2"/><rect x="0" y="14" width="2" height="2" fill="#c2c2c2"/></svg>
<svg style="left:365px;top:31px" width="2" height="16" viewBox="0 0 2 16"><rect x="0" y="2" width="2" height="2" fill="#c2c2c2"/><rect x="0" y="6" width="2" height="2" fill="#c2c2c2"/><rect x="0" y="10" width="2" height="2" fill="#c2c2c2"/><rect x="0" y="14" width="2" height="2" fill="#c2c2c2"/></svg>
<svg style="left:522px;top:31px" width="2" height="16" viewBox="0 0 2 16"><rect x="0" y="2" width="2" height="2" fill="#c2c2c2"/><rect x="0" y="6" width="2" height="2" fill="#c2c2c2"/><rect x="0" y="10" width="2" height="2" fill="#c2c2c2"/><rect x="0" y="14" width="2" height="2" fill="#c2c2c2"/></svg>
<svg style="left:611px;top:31px" width="2" height="16" viewBox="0 0 2 16"><rect x="0" y="2" width="2" height="2" fill="#c2c2c2"/><rect x="0" y="6" width="2" height="2" fill="#c2c2c2"/><rect x="0" y="10" width="2" height="2" fill="#c2c2c2"/><rect x="0" y="14" width="2" height="2" fill="#c2c2c2"/></svg>
<svg style="left:754px;top:31px" width="2" height="16" viewBox="0 0 2 16"><rect x="0" y="2" width="2" height="2" fill="#c2c2c2"/><rect x="0" y="6" width="2" height="2" fill="#c2c2c2"/><rect x="0" y="10" width="2" height="2" fill="#c2c2c2"/><rect x="0" y="14" width="2" height="2" fill="#c2c2c2"/></svg>
<svg style="left:1545px;top:31px" width="2" height="16" viewBox="0 0 2 16"><rect x="0" y="2" width="2" height="2" fill="#c2c2c2"/><rect x="0" y="6" width="2" height="2" fill="#c2c2c2"/><rect x="0" y="10" width="2" height="2" fill="#c2c2c2"/><rect x="0" y="14" width="2" height="2" fill="#c2c2c2"/></svg>
<svg style="left:142px;top:30px" width="2" height="18" viewBox="0 0 2 18"><rect x="0" y="0" width="1.2" height="18" fill="#8a8a8a"/></svg>
<svg style="left:312px;top:30px" width="2" height="18" viewBox="0 0 2 18"><rect x="0" y="0" width="1.2" height="18" fill="#8a8a8a"/></svg>
<svg style="left:958px;top:30px" width="2" height="18" viewBox="0 0 2 18"><rect x="0" y="0" width="1.2" height="18" fill="#8a8a8a"/></svg>
<svg style="left:1573px;top:30px" width="2" height="18" viewBox="0 0 2 18"><rect x="0" y="0" width="1.2" height="18" fill="#8a8a8a"/></svg>
<div class="a" style="left:1601px;top:28px;width:23px;height:21px;background:#cce2f6;border:1px solid #a6c9ec"></div>
<svg style="left:1605px;top:31px" width="16" height="16" viewBox="0 0 16 16"><path d="M5.5 1v3.5M10 1.5v3M0.5 5.5l4 1.2M15.5 6l-3.5 1M1.5 10h3.5M15.5 11.5l-3-1M4 14.5l2.5-2.5M12 15l-1.5-2.5M6.5 13.5l.5 2.5" stroke="#2a6a6a" stroke-width="1"/><ellipse cx="9" cy="9" rx="3.6" ry="4.6" transform="rotate(-40 9 9)" fill="#a8d8c0" stroke="#2a6a6a" stroke-width="1.1"/><path d="M7 7l4 4.5" stroke="#7ab8a0" stroke-width="1"/><circle cx="5.5" cy="5.5" r="1.6" fill="#8ac8b0" stroke="#2a6a6a" stroke-width=".9"/></svg>
<svg style="left:0px;top:58px" width="16" height="16" viewBox="0 0 16 16"><path d="M0.5 1.5h6l2.5 2.5v9h-8.5z" fill="#f4f6fa" stroke="#98a090"/><path d="M2 4.5h4M2 6.5h4M2 8.5h4M2 10.5h3" stroke="#6080b0"/><path d="M4.5 15.5V9.5h3.5l1-1h3.5l1 1h1.5v6z" fill="#fcd67a" stroke="#a8782a"/></svg>
<svg style="left:111px;top:62px" width="10" height="10" viewBox="0 0 10 10"><path d="M0.5 0.5H3.2L5 3.3 6.8 0.5H9.5V3.2L6.7 5 9.5 6.8V9.5H6.8L5 6.7 3.2 9.5H0.5V6.8L3.3 5 0.5 3.2Z" fill="#fff" stroke="#4a4a4a" stroke-width="1" stroke-linejoin="miter"/></svg>
<svg style="left:133px;top:59px" width="16" height="16" viewBox="0 0 16 16"><path d="M5.5 1v3.5M10 1.5v3M0.5 5.5l4 1.2M15.5 6l-3.5 1M1.5 10h3.5M15.5 11.5l-3-1M4 14.5l2.5-2.5M12 15l-1.5-2.5M6.5 13.5l.5 2.5" stroke="#2a6a6a" stroke-width="1"/><ellipse cx="9" cy="9" rx="3.6" ry="4.6" transform="rotate(-40 9 9)" fill="#a8d8c0" stroke="#2a6a6a" stroke-width="1.1"/><path d="M7 7l4 4.5" stroke="#7ab8a0" stroke-width="1"/><circle cx="5.5" cy="5.5" r="1.6" fill="#8ac8b0" stroke="#2a6a6a" stroke-width=".9"/></svg>
<svg style="left:239px;top:59px" width="16" height="16" viewBox="0 0 16 16"><path d="M0.5 10.5v-9h9" fill="none" stroke="#8aa0c0"/><rect x="2.5" y="3.5" width="9" height="9" fill="#eef4fc" stroke="#5a7aa8"/><path d="M4.5 8h5" stroke="#203a70" stroke-width="1.4"/></svg>
<div class="a" style="left:258px;top:55px;width:23px;height:21px;background:#cce2f6;border:1px solid #a6c9ec"></div>
<svg style="left:262px;top:58px" width="16" height="16" viewBox="0 0 16 16"><path d="M6.5 0.8L1 4.5l5.5 3.7V6.2h6.5V2.8H6.5z" fill="#fde69a" stroke="#c48a20" stroke-linejoin="round"/><path d="M9.5 7.8l5.5 3.7-5.5 3.7v-2H3v-3.4h6.5z" fill="#fde69a" stroke="#c48a20" stroke-linejoin="round"/></svg>
<svg style="left:284px;top:59px" width="16" height="16" viewBox="0 0 16 16"><path d="M0.5 1.5h13l-5 6v7l-3-2v-5z" fill="#e8f0f8" stroke="#6a88b0" stroke-linejoin="round"/><path d="M3 2.5l3.5 4.5" stroke="#fff"/></svg>
<svg style="left:306px;top:58px" width="2" height="16" viewBox="0 0 2 16"><rect x="0" y="0" width="1.2" height="18" fill="#8a8a8a"/></svg>
<svg style="left:315px;top:59px" width="16" height="16" viewBox="0 0 16 16"><circle cx="4.5" cy="9.5" r="3" fill="#a8a8a8"/><circle cx="10" cy="8" r="2.8" fill="#c0c0c0"/><circle cx="5" cy="4.5" r="2.5" fill="#d0d0d0"/></svg>
<svg style="left:344px;top:59px" width="4" height="13" viewBox="0 0 4 13"><circle cx="2" cy="2" r="1.6" fill="#fff" stroke="#404040" stroke-width="1"/><circle cx="2" cy="7" r="1.6" fill="#fff" stroke="#404040" stroke-width="1"/><circle cx="2" cy="12" r="1.6" fill="#fff" stroke="#404040" stroke-width="1"/></svg>
<svg style="left:364px;top:61px" width="11" height="4" viewBox="0 0 11 4"><rect x="0.5" y="0.5" width="10" height="2.5" fill="#fff" stroke="#404040" stroke-width="1"/></svg>
<svg style="left:387px;top:61px" width="11" height="11" viewBox="0 0 11 11"><rect x="0.5" y="0.5" width="10" height="10" fill="#fff" stroke="#404040" stroke-width="1"/><path d="M0.5 2.5h10" stroke="#404040"/></svg>
<svg style="left:3px;top:84px" width="8" height="10" viewBox="0 0 8 10"><path d="M1.8 1.2l3.8 3.9-3.8 3.9" fill="none" stroke="#9a9a9a" stroke-width="1.7"/></svg>
<svg style="left:15px;top:80px" width="16" height="16" viewBox="0 0 16 16"><path d="M1.5 4.5v4M0.8 4.5h2" stroke="#707070" stroke-width="1"/><rect x="2.5" y="2.5" width="7.5" height="5.5" rx="1.2" fill="#f9e4ac" stroke="#c9a878"/><path d="M14.3 0v4.8q0 1.7-1.7 1.7h-1.3" fill="none" stroke="#3b5f8c" stroke-width="1.6"/><path d="M7 8.5h9" stroke="#2c3e70" stroke-width="1.2"/><rect x="7" y="9" width="3.2" height="5" fill="#a8c8f0"/><path d="M7.5 13.5h2.2" stroke="#2c4d84"/><rect x="0" y="8" width="7.5" height="8" fill="#d43a4a"/><path d="M2 10.2l3.5 3.6M5.5 10.2l-3.5 3.6" stroke="#fff" stroke-width="1.4"/><path d="M10.5 10.2v4.6q0 .9 2.5 .9t2.5-.9v-4.6" fill="#f6c646" stroke="#b98a2a"/><ellipse cx="13" cy="10.2" rx="2.5" ry="1" fill="#fbe08a" stroke="#b98a2a"/></svg>
<svg style="left:2px;top:104px" width="10" height="7" viewBox="0 0 10 7"><path d="M0.8 1.5l4 3.8 4-3.8" fill="none" stroke="#3a3a3a" stroke-width="1.7"/></svg>
<svg style="left:15px;top:98px" width="16" height="16" viewBox="0 0 16 16"><path d="M1.5 4.5v4M0.8 4.5h2" stroke="#707070" stroke-width="1"/><rect x="2.5" y="2.5" width="7.5" height="5.5" rx="1.2" fill="#f9e4ac" stroke="#c9a878"/><path d="M14.3 0v4.8q0 1.7-1.7 1.7h-1.3" fill="none" stroke="#3b5f8c" stroke-width="1.6"/><path d="M7 8.5h9" stroke="#2c3e70" stroke-width="1.2"/><rect x="7" y="9" width="3.2" height="5" fill="#a8c8f0"/><path d="M7.5 13.5h2.2" stroke="#2c4d84"/><rect x="0" y="8" width="7.5" height="8" fill="#d43a4a"/><path d="M2 10.2l3.5 3.6M5.5 10.2l-3.5 3.6" stroke="#fff" stroke-width="1.4"/><path d="M10.5 10.2v4.6q0 .9 2.5 .9t2.5-.9v-4.6" fill="#f6c646" stroke="#b98a2a"/><ellipse cx="13" cy="10.2" rx="2.5" ry="1" fill="#fbe08a" stroke="#b98a2a"/></svg>
<svg style="left:18px;top:122px" width="10" height="7" viewBox="0 0 10 7"><path d="M0.8 1.5l4 3.8 4-3.8" fill="none" stroke="#3a3a3a" stroke-width="1.7"/></svg>
<svg style="left:31px;top:116px" width="16" height="16" viewBox="0 0 16 16"><path d="M1.5 8.5V5h2.5l1-1.5h3v5" fill="#f9e3a8" stroke="#b8995a"/><rect x="6.5" y="0.5" width="8" height="8" fill="#e6c49a" stroke="#9b7048"/><path d="M10.5 0v9M6 4.5h9" stroke="#6b4a2a"/><rect x="0" y="8" width="7.5" height="8" fill="#d43a4a"/><path d="M2 10.2l3.5 3.6M5.5 10.2l-3.5 3.6" stroke="#fff" stroke-width="1.4"/><path d="M10.5 10.2v4.6q0 .9 2.5 .9t2.5-.9v-4.6" fill="#f6c646" stroke="#b98a2a"/><ellipse cx="13" cy="10.2" rx="2.5" ry="1" fill="#fbe08a" stroke="#b98a2a"/></svg>
<svg style="left:35px;top:138px" width="8" height="10" viewBox="0 0 8 10"><path d="M1.8 1.2l3.8 3.9-3.8 3.9" fill="none" stroke="#9a9a9a" stroke-width="1.7"/></svg>
<svg style="left:47px;top:134px" width="16" height="16" viewBox="0 0 16 16"><rect x="3.5" y="2.5" width="11" height="12.5" fill="#e9cba8" stroke="#b48a66"/><path d="M4 3h4.5v5H4z" fill="#f2dcc0"/><path d="M8.8 1.5v14.5M2 8.2h15" stroke="#6b4a2a" stroke-width="1.1"/><path d="M3.3 8.8 Q3.8 8.5 4.2 9.2 L6.8 14.6 Q7 15.5 6 15.5 H0.6 Q-0.4 15.5 0 14.6 L2.5 9.2 Z" fill="#f7c95a" stroke="#c08a28" stroke-width=".9"/><path d="M3.4 10.6v2.4M3.4 13.8v1" stroke="#2a2a2a" stroke-width="1.3"/><path d="M10.5 10.2v4.6q0 .9 2.5 .9t2.5-.9v-4.6" fill="#f6c646" stroke="#b98a2a"/><ellipse cx="13" cy="10.2" rx="2.5" ry="1" fill="#fbe08a" stroke="#b98a2a"/></svg>
<svg style="left:35px;top:156px" width="8" height="10" viewBox="0 0 8 10"><path d="M1.8 1.2l3.8 3.9-3.8 3.9" fill="none" stroke="#9a9a9a" stroke-width="1.7"/></svg>
<svg style="left:47px;top:152px" width="16" height="16" viewBox="0 0 16 16"><rect x="3.5" y="2.5" width="11" height="12.5" fill="#e9cba8" stroke="#b48a66"/><path d="M4 3h4.5v5H4z" fill="#f2dcc0"/><path d="M8.8 1.5v14.5M2 8.2h15" stroke="#6b4a2a" stroke-width="1.1"/><path d="M10.5 10.2v4.6q0 .9 2.5 .9t2.5-.9v-4.6" fill="#f6c646" stroke="#b98a2a"/><ellipse cx="13" cy="10.2" rx="2.5" ry="1" fill="#fbe08a" stroke="#b98a2a"/></svg>
<svg style="left:35px;top:174px" width="8" height="10" viewBox="0 0 8 10"><path d="M1.8 1.2l3.8 3.9-3.8 3.9" fill="none" stroke="#9a9a9a" stroke-width="1.7"/></svg>
<svg style="left:47px;top:170px" width="16" height="16" viewBox="0 0 16 16"><rect x="3.5" y="2.5" width="11" height="12.5" fill="#e9cba8" stroke="#b48a66"/><path d="M4 3h4.5v5H4z" fill="#f2dcc0"/><path d="M8.8 1.5v14.5M2 8.2h15" stroke="#6b4a2a" stroke-width="1.1"/><path d="M3.3 8.8 Q3.8 8.5 4.2 9.2 L6.8 14.6 Q7 15.5 6 15.5 H0.6 Q-0.4 15.5 0 14.6 L2.5 9.2 Z" fill="#f7c95a" stroke="#c08a28" stroke-width=".9"/><path d="M3.4 10.6v2.4M3.4 13.8v1" stroke="#2a2a2a" stroke-width="1.3"/><path d="M10.5 10.2v4.6q0 .9 2.5 .9t2.5-.9v-4.6" fill="#f6c646" stroke="#b98a2a"/><ellipse cx="13" cy="10.2" rx="2.5" ry="1" fill="#fbe08a" stroke="#b98a2a"/></svg>
<svg style="left:35px;top:192px" width="8" height="10" viewBox="0 0 8 10"><path d="M1.8 1.2l3.8 3.9-3.8 3.9" fill="none" stroke="#9a9a9a" stroke-width="1.7"/></svg>
<svg style="left:47px;top:188px" width="16" height="16" viewBox="0 0 16 16"><rect x="3.5" y="2.5" width="11" height="12.5" fill="#e9cba8" stroke="#b48a66"/><path d="M4 3h4.5v5H4z" fill="#f2dcc0"/><path d="M8.8 1.5v14.5M2 8.2h15" stroke="#6b4a2a" stroke-width="1.1"/><rect x="0" y="8" width="7.5" height="8" fill="#d43a4a"/><path d="M2 10.2l3.5 3.6M5.5 10.2l-3.5 3.6" stroke="#fff" stroke-width="1.4"/><path d="M10.5 10.2v4.6q0 .9 2.5 .9t2.5-.9v-4.6" fill="#f6c646" stroke="#b98a2a"/><ellipse cx="13" cy="10.2" rx="2.5" ry="1" fill="#fbe08a" stroke="#b98a2a"/></svg>
<svg style="left:34px;top:212px" width="10" height="7" viewBox="0 0 10 7"><path d="M0.8 1.5l4 3.8 4-3.8" fill="none" stroke="#3a3a3a" stroke-width="1.7"/></svg>
<svg style="left:47px;top:206px" width="16" height="16" viewBox="0 0 16 16"><rect x="3.5" y="2.5" width="11" height="12.5" fill="#e9cba8" stroke="#b48a66"/><path d="M4 3h4.5v5H4z" fill="#f2dcc0"/><path d="M8.8 1.5v14.5M2 8.2h15" stroke="#6b4a2a" stroke-width="1.1"/><path d="M3.3 8.8 Q3.8 8.5 4.2 9.2 L6.8 14.6 Q7 15.5 6 15.5 H0.6 Q-0.4 15.5 0 14.6 L2.5 9.2 Z" fill="#f7c95a" stroke="#c08a28" stroke-width=".9"/><path d="M3.4 10.6v2.4M3.4 13.8v1" stroke="#2a2a2a" stroke-width="1.3"/><path d="M10.5 10.2v4.6q0 .9 2.5 .9t2.5-.9v-4.6" fill="#f6c646" stroke="#b98a2a"/><ellipse cx="13" cy="10.2" rx="2.5" ry="1" fill="#fbe08a" stroke="#b98a2a"/></svg>
<svg style="left:51px;top:228px" width="8" height="10" viewBox="0 0 8 10"><path d="M1.8 1.2l3.8 3.9-3.8 3.9" fill="none" stroke="#9a9a9a" stroke-width="1.7"/></svg>
<svg style="left:63px;top:224px" width="16" height="16" viewBox="0 0 16 16"><path d="M3.5 1.5h7l3 3v10h-10z" fill="#eef3fa" stroke="#9a8658"/><path d="M10.5 1.5v3h3" fill="none" stroke="#9a8658"/><path d="M9.2 4.5v6q0 2-2 2h-1" fill="none" stroke="#3a6cae" stroke-width="1.8"/><path d="M3.3 8.8 Q3.8 8.5 4.2 9.2 L6.8 14.6 Q7 15.5 6 15.5 H0.6 Q-0.4 15.5 0 14.6 L2.5 9.2 Z" fill="#f7c95a" stroke="#c08a28" stroke-width=".9"/><path d="M3.4 10.6v2.4M3.4 13.8v1" stroke="#2a2a2a" stroke-width="1.3"/><path d="M10.5 10.2v4.6q0 .9 2.5 .9t2.5-.9v-4.6" fill="#f6c646" stroke="#b98a2a"/><ellipse cx="13" cy="10.2" rx="2.5" ry="1" fill="#fbe08a" stroke="#b98a2a"/></svg>
<svg style="left:51px;top:246px" width="8" height="10" viewBox="0 0 8 10"><path d="M1.8 1.2l3.8 3.9-3.8 3.9" fill="none" stroke="#9a9a9a" stroke-width="1.7"/></svg>
<svg style="left:63px;top:242px" width="16" height="16" viewBox="0 0 16 16"><path d="M3.5 1.5h7l3 3v10h-10z" fill="#eef3fa" stroke="#9a8658"/><path d="M10.5 1.5v3h3" fill="none" stroke="#9a8658"/><path d="M9.2 4.5v6q0 2-2 2h-1" fill="none" stroke="#3a6cae" stroke-width="1.8"/><path d="M10.5 10.2v4.6q0 .9 2.5 .9t2.5-.9v-4.6" fill="#f6c646" stroke="#b98a2a"/><ellipse cx="13" cy="10.2" rx="2.5" ry="1" fill="#fbe08a" stroke="#b98a2a"/></svg>
<svg style="left:51px;top:264px" width="8" height="10" viewBox="0 0 8 10"><path d="M1.8 1.2l3.8 3.9-3.8 3.9" fill="none" stroke="#9a9a9a" stroke-width="1.7"/></svg>
<svg style="left:63px;top:260px" width="16" height="16" viewBox="0 0 16 16"><path d="M3.5 1.5h7l3 3v10h-10z" fill="#eef3fa" stroke="#9a8658"/><path d="M10.5 1.5v3h3" fill="none" stroke="#9a8658"/><path d="M9.2 4.5v6q0 2-2 2h-1" fill="none" stroke="#3a6cae" stroke-width="1.8"/><path d="M3.3 8.8 Q3.8 8.5 4.2 9.2 L6.8 14.6 Q7 15.5 6 15.5 H0.6 Q-0.4 15.5 0 14.6 L2.5 9.2 Z" fill="#f7c95a" stroke="#c08a28" stroke-width=".9"/><path d="M3.4 10.6v2.4M3.4 13.8v1" stroke="#2a2a2a" stroke-width="1.3"/><path d="M10.5 10.2v4.6q0 .9 2.5 .9t2.5-.9v-4.6" fill="#f6c646" stroke="#b98a2a"/><ellipse cx="13" cy="10.2" rx="2.5" ry="1" fill="#fbe08a" stroke="#b98a2a"/></svg>
<svg style="left:51px;top:282px" width="8" height="10" viewBox="0 0 8 10"><path d="M1.8 1.2l3.8 3.9-3.8 3.9" fill="none" stroke="#9a9a9a" stroke-width="1.7"/></svg>
<svg style="left:63px;top:278px" width="16" height="16" viewBox="0 0 16 16"><path d="M3.5 1.5h7l3 3v10h-10z" fill="#eef3fa" stroke="#9a8658"/><path d="M10.5 1.5v3h3" fill="none" stroke="#9a8658"/><path d="M9.2 4.5v6q0 2-2 2h-1" fill="none" stroke="#3a6cae" stroke-width="1.8"/><path d="M10.5 10.2v4.6q0 .9 2.5 .9t2.5-.9v-4.6" fill="#f6c646" stroke="#b98a2a"/><ellipse cx="13" cy="10.2" rx="2.5" ry="1" fill="#fbe08a" stroke="#b98a2a"/></svg>
<svg style="left:51px;top:300px" width="8" height="10" viewBox="0 0 8 10"><path d="M1.8 1.2l3.8 3.9-3.8 3.9" fill="none" stroke="#9a9a9a" stroke-width="1.7"/></svg>
<svg style="left:63px;top:296px" width="16" height="16" viewBox="0 0 16 16"><path d="M3.5 1.5h7l3 3v10h-10z" fill="#eef3fa" stroke="#9a8658"/><path d="M10.5 1.5v3h3" fill="none" stroke="#9a8658"/><path d="M9.2 4.5v6q0 2-2 2h-1" fill="none" stroke="#3a6cae" stroke-width="1.8"/><path d="M3.3 8.8 Q3.8 8.5 4.2 9.2 L6.8 14.6 Q7 15.5 6 15.5 H0.6 Q-0.4 15.5 0 14.6 L2.5 9.2 Z" fill="#f7c95a" stroke="#c08a28" stroke-width=".9"/><path d="M3.4 10.6v2.4M3.4 13.8v1" stroke="#2a2a2a" stroke-width="1.3"/><path d="M10.5 10.2v4.6q0 .9 2.5 .9t2.5-.9v-4.6" fill="#f6c646" stroke="#b98a2a"/><ellipse cx="13" cy="10.2" rx="2.5" ry="1" fill="#fbe08a" stroke="#b98a2a"/></svg>
<svg style="left:51px;top:318px" width="8" height="10" viewBox="0 0 8 10"><path d="M1.8 1.2l3.8 3.9-3.8 3.9" fill="none" stroke="#9a9a9a" stroke-width="1.7"/></svg>
<svg style="left:63px;top:314px" width="16" height="16" viewBox="0 0 16 16"><path d="M3.5 1.5h7l3 3v10h-10z" fill="#eef3fa" stroke="#9a8658"/><path d="M10.5 1.5v3h3" fill="none" stroke="#9a8658"/><path d="M9.2 4.5v6q0 2-2 2h-1" fill="none" stroke="#3a6cae" stroke-width="1.8"/><path d="M10.5 10.2v4.6q0 .9 2.5 .9t2.5-.9v-4.6" fill="#f6c646" stroke="#b98a2a"/><ellipse cx="13" cy="10.2" rx="2.5" ry="1" fill="#fbe08a" stroke="#b98a2a"/></svg>
<svg style="left:51px;top:336px" width="8" height="10" viewBox="0 0 8 10"><path d="M1.8 1.2l3.8 3.9-3.8 3.9" fill="none" stroke="#9a9a9a" stroke-width="1.7"/></svg>
<svg style="left:63px;top:332px" width="16" height="16" viewBox="0 0 16 16"><path d="M3.5 1.5h7l3 3v10h-10z" fill="#eef3fa" stroke="#9a8658"/><path d="M10.5 1.5v3h3" fill="none" stroke="#9a8658"/><path d="M9.2 4.5v6q0 2-2 2h-1" fill="none" stroke="#3a6cae" stroke-width="1.8"/><path d="M10.5 10.2v4.6q0 .9 2.5 .9t2.5-.9v-4.6" fill="#f6c646" stroke="#b98a2a"/><ellipse cx="13" cy="10.2" rx="2.5" ry="1" fill="#fbe08a" stroke="#b98a2a"/></svg>
<svg style="left:51px;top:354px" width="8" height="10" viewBox="0 0 8 10"><path d="M1.8 1.2l3.8 3.9-3.8 3.9" fill="none" stroke="#9a9a9a" stroke-width="1.7"/></svg>
<svg style="left:63px;top:350px" width="16" height="16" viewBox="0 0 16 16"><path d="M3.5 1.5h7l3 3v10h-10z" fill="#eef3fa" stroke="#9a8658"/><path d="M10.5 1.5v3h3" fill="none" stroke="#9a8658"/><path d="M9.2 4.5v6q0 2-2 2h-1" fill="none" stroke="#3a6cae" stroke-width="1.8"/><path d="M10.5 10.2v4.6q0 .9 2.5 .9t2.5-.9v-4.6" fill="#f6c646" stroke="#b98a2a"/><ellipse cx="13" cy="10.2" rx="2.5" ry="1" fill="#fbe08a" stroke="#b98a2a"/></svg>
<svg style="left:51px;top:372px" width="8" height="10" viewBox="0 0 8 10"><path d="M1.8 1.2l3.8 3.9-3.8 3.9" fill="none" stroke="#9a9a9a" stroke-width="1.7"/></svg>
<svg style="left:63px;top:368px" width="16" height="16" viewBox="0 0 16 16"><path d="M3.5 1.5h7l3 3v10h-10z" fill="#eef3fa" stroke="#9a8658"/><path d="M10.5 1.5v3h3" fill="none" stroke="#9a8658"/><path d="M9.2 4.5v6q0 2-2 2h-1" fill="none" stroke="#3a6cae" stroke-width="1.8"/><path d="M10.5 10.2v4.6q0 .9 2.5 .9t2.5-.9v-4.6" fill="#f6c646" stroke="#b98a2a"/><ellipse cx="13" cy="10.2" rx="2.5" ry="1" fill="#fbe08a" stroke="#b98a2a"/></svg>
<svg style="left:51px;top:390px" width="8" height="10" viewBox="0 0 8 10"><path d="M1.8 1.2l3.8 3.9-3.8 3.9" fill="none" stroke="#9a9a9a" stroke-width="1.7"/></svg>
<svg style="left:63px;top:386px" width="16" height="16" viewBox="0 0 16 16"><path d="M3.5 1.5h7l3 3v10h-10z" fill="#eef3fa" stroke="#9a8658"/><path d="M10.5 1.5v3h3" fill="none" stroke="#9a8658"/><path d="M9.2 4.5v6q0 2-2 2h-1" fill="none" stroke="#3a6cae" stroke-width="1.8"/><path d="M3.3 8.8 Q3.8 8.5 4.2 9.2 L6.8 14.6 Q7 15.5 6 15.5 H0.6 Q-0.4 15.5 0 14.6 L2.5 9.2 Z" fill="#f7c95a" stroke="#c08a28" stroke-width=".9"/><path d="M3.4 10.6v2.4M3.4 13.8v1" stroke="#2a2a2a" stroke-width="1.3"/><path d="M10.5 10.2v4.6q0 .9 2.5 .9t2.5-.9v-4.6" fill="#f6c646" stroke="#b98a2a"/><ellipse cx="13" cy="10.2" rx="2.5" ry="1" fill="#fbe08a" stroke="#b98a2a"/></svg>
<svg style="left:47px;top:404px" width="16" height="16" viewBox="0 0 16 16"><path d="M3.5 1.5h7l3 3v10h-10z" fill="#f4f6fa" stroke="#9aa0a8"/><path d="M10.5 1.5v3h3" fill="none" stroke="#b0a890"/><path d="M5 4.5h4M5 6.5h6M5 8.5h6M5 10.5h6M5 12.5h5" stroke="#5a7cc0" stroke-width="1"/><path d="M10.5 10.2v4.6q0 .9 2.5 .9t2.5-.9v-4.6" fill="#f6c646" stroke="#b98a2a"/><ellipse cx="13" cy="10.2" rx="2.5" ry="1" fill="#fbe08a" stroke="#b98a2a"/></svg>
<svg style="left:47px;top:422px" width="16" height="16" viewBox="0 0 16 16"><path d="M3.5 1.5h7l3 3v10h-10z" fill="#f4f6fa" stroke="#9aa0a8"/><path d="M10.5 1.5v3h3" fill="none" stroke="#b0a890"/><path d="M5 4.5h4M5 6.5h6M5 8.5h6M5 10.5h6M5 12.5h5" stroke="#5a7cc0" stroke-width="1"/><path d="M10.5 10.2v4.6q0 .9 2.5 .9t2.5-.9v-4.6" fill="#f6c646" stroke="#b98a2a"/><ellipse cx="13" cy="10.2" rx="2.5" ry="1" fill="#fbe08a" stroke="#b98a2a"/></svg>
<svg style="left:47px;top:440px" width="16" height="16" viewBox="0 0 16 16"><path d="M3.5 1.5h7l3 3v10h-10z" fill="#f4f6fa" stroke="#9aa0a8"/><path d="M10.5 1.5v3h3" fill="none" stroke="#b0a890"/><path d="M5 4.5h4M5 6.5h6M5 8.5h6M5 10.5h6M5 12.5h5" stroke="#5a7cc0" stroke-width="1"/><path d="M10.5 10.2v4.6q0 .9 2.5 .9t2.5-.9v-4.6" fill="#f6c646" stroke="#b98a2a"/><ellipse cx="13" cy="10.2" rx="2.5" ry="1" fill="#fbe08a" stroke="#b98a2a"/></svg>
<svg style="left:47px;top:458px" width="16" height="16" viewBox="0 0 16 16"><path d="M3.5 1.5h7l3 3v10h-10z" fill="#f4f6fa" stroke="#9aa0a8"/><path d="M10.5 1.5v3h3" fill="none" stroke="#b0a890"/><path d="M5 4.5h4M5 6.5h6M5 8.5h6M5 10.5h6M5 12.5h5" stroke="#5a7cc0" stroke-width="1"/><path d="M10.5 10.2v4.6q0 .9 2.5 .9t2.5-.9v-4.6" fill="#f6c646" stroke="#b98a2a"/><ellipse cx="13" cy="10.2" rx="2.5" ry="1" fill="#fbe08a" stroke="#b98a2a"/></svg>
<svg style="left:47px;top:476px" width="16" height="16" viewBox="0 0 16 16"><path d="M3.5 1.5h7l3 3v10h-10z" fill="#f4f6fa" stroke="#9aa0a8"/><path d="M10.5 1.5v3h3" fill="none" stroke="#b0a890"/><path d="M5 4.5h4M5 6.5h6M5 8.5h6M5 10.5h6M5 12.5h5" stroke="#5a7cc0" stroke-width="1"/><path d="M10.5 10.2v4.6q0 .9 2.5 .9t2.5-.9v-4.6" fill="#f6c646" stroke="#b98a2a"/><ellipse cx="13" cy="10.2" rx="2.5" ry="1" fill="#fbe08a" stroke="#b98a2a"/></svg>
<svg style="left:47px;top:494px" width="16" height="16" viewBox="0 0 16 16"><path d="M3.5 1.5h7l3 3v10h-10z" fill="#f4f6fa" stroke="#9aa0a8"/><path d="M10.5 1.5v3h3" fill="none" stroke="#b0a890"/><path d="M5 4.5h4M5 6.5h6M5 8.5h6M5 10.5h6M5 12.5h5" stroke="#5a7cc0" stroke-width="1"/><path d="M10.5 10.2v4.6q0 .9 2.5 .9t2.5-.9v-4.6" fill="#f6c646" stroke="#b98a2a"/><ellipse cx="13" cy="10.2" rx="2.5" ry="1" fill="#fbe08a" stroke="#b98a2a"/></svg>
<svg style="left:47px;top:512px" width="16" height="16" viewBox="0 0 16 16"><path d="M3.5 1.5h7l3 3v10h-10z" fill="#f4f6fa" stroke="#9aa0a8"/><path d="M10.5 1.5v3h3" fill="none" stroke="#b0a890"/><path d="M5 4.5h4M5 6.5h6M5 8.5h6M5 10.5h6M5 12.5h5" stroke="#5a7cc0" stroke-width="1"/><path d="M10.5 10.2v4.6q0 .9 2.5 .9t2.5-.9v-4.6" fill="#f6c646" stroke="#b98a2a"/><ellipse cx="13" cy="10.2" rx="2.5" ry="1" fill="#fbe08a" stroke="#b98a2a"/></svg>
<svg style="left:19px;top:534px" width="8" height="10" viewBox="0 0 8 10"><path d="M1.8 1.2l3.8 3.9-3.8 3.9" fill="none" stroke="#9a9a9a" stroke-width="1.7"/></svg>
<svg style="left:31px;top:530px" width="16" height="16" viewBox="0 0 16 16"><rect x="1" y="5" width="10" height="2.5" fill="#1f6f9a"/><rect x="1.5" y="7.5" width="9.5" height="3" fill="#3aa07a"/><rect x="1" y="10.5" width="10" height="3" fill="#e0784a" stroke="#a84a28" stroke-width=".6"/><path d="M10 3.5l2-1 4 11h-3z" fill="#f4b848" stroke="#c8862a" stroke-width=".8"/></svg>
<svg style="left:19px;top:552px" width="8" height="10" viewBox="0 0 8 10"><path d="M1.8 1.2l3.8 3.9-3.8 3.9" fill="none" stroke="#9a9a9a" stroke-width="1.7"/></svg>
<svg style="left:31px;top:548px" width="16" height="16" viewBox="0 0 16 16"><path d="M1.5 14.5V4.5h2.5l1-1.5h3.5l1 1.5h5v10z" fill="#f9dc9a" stroke="#b8892e"/><path d="M1.5 14.5l4-6h9" fill="none" stroke="#b8892e"/><g transform="translate(0 0)"><path d="M10.5 10.2v4.6q0 .9 2.5 .9t2.5-.9v-4.6" fill="#f6c646" stroke="#b98a2a"/><ellipse cx="13" cy="10.2" rx="2.5" ry="1" fill="#fbe08a" stroke="#b98a2a"/></g></svg>
<svg style="left:31px;top:566px" width="16" height="16" viewBox="0 0 16 16"><path d="M3.5 1.5h7l3 3v10h-10z" fill="#f4f6fa" stroke="#9aa0a8"/><path d="M10.5 1.5v3h3" fill="none" stroke="#b0a890"/><path d="M5 4.5h4M5 6.5h6M5 8.5h6M5 10.5h6M5 12.5h5" stroke="#5a7cc0" stroke-width="1"/><path d="M10.5 10.2v4.6q0 .9 2.5 .9t2.5-.9v-4.6" fill="#f6c646" stroke="#b98a2a"/><ellipse cx="13" cy="10.2" rx="2.5" ry="1" fill="#fbe08a" stroke="#b98a2a"/></svg>
<svg style="left:31px;top:584px" width="16" height="16" viewBox="0 0 16 16"><path d="M3.5 1.5h7l3 3v10h-10z" fill="#f4f6fa" stroke="#9aa0a8"/><path d="M10.5 1.5v3h3" fill="none" stroke="#b0a890"/><path d="M5 4.5h4M5 6.5h6M5 8.5h6M5 10.5h6M5 12.5h5" stroke="#5a7cc0" stroke-width="1"/><path d="M10.5 10.2v4.6q0 .9 2.5 .9t2.5-.9v-4.6" fill="#f6c646" stroke="#b98a2a"/><ellipse cx="13" cy="10.2" rx="2.5" ry="1" fill="#fbe08a" stroke="#b98a2a"/></svg>
<svg style="left:31px;top:602px" width="16" height="16" viewBox="0 0 16 16"><path d="M3.5 1.5h7l3 3v10h-10z" fill="#f4f6fa" stroke="#9aa0a8"/><path d="M10.5 1.5v3h3" fill="none" stroke="#b0a890"/><path d="M5 4.5h4M5 6.5h6M5 8.5h6M5 10.5h6M5 12.5h5" stroke="#5a7cc0" stroke-width="1"/><path d="M10.5 10.2v4.6q0 .9 2.5 .9t2.5-.9v-4.6" fill="#f6c646" stroke="#b98a2a"/><ellipse cx="13" cy="10.2" rx="2.5" ry="1" fill="#fbe08a" stroke="#b98a2a"/></svg>
<svg style="left:31px;top:620px" width="16" height="16" viewBox="0 0 16 16"><path d="M3.5 1.5h7l3 3v10h-10z" fill="#f4f6fa" stroke="#9aa0a8"/><path d="M10.5 1.5v3h3" fill="none" stroke="#b0a890"/><path d="M5 4.5h4M5 6.5h6M5 8.5h6M5 10.5h6M5 12.5h5" stroke="#5a7cc0" stroke-width="1"/><path d="M10.5 10.2v4.6q0 .9 2.5 .9t2.5-.9v-4.6" fill="#f6c646" stroke="#b98a2a"/><ellipse cx="13" cy="10.2" rx="2.5" ry="1" fill="#fbe08a" stroke="#b98a2a"/></svg>
<svg style="left:31px;top:638px" width="16" height="16" viewBox="0 0 16 16"><path d="M3.5 1.5h7l3 3v10h-10z" fill="#f4f6fa" stroke="#9aa0a8"/><path d="M10.5 1.5v3h3" fill="none" stroke="#b0a890"/><path d="M5 4.5h4M5 6.5h6M5 8.5h6M5 10.5h6M5 12.5h5" stroke="#5a7cc0" stroke-width="1"/><path d="M10.5 10.2v4.6q0 .9 2.5 .9t2.5-.9v-4.6" fill="#f6c646" stroke="#b98a2a"/><ellipse cx="13" cy="10.2" rx="2.5" ry="1" fill="#fbe08a" stroke="#b98a2a"/></svg>
<svg style="left:3px;top:660px" width="8" height="10" viewBox="0 0 8 10"><path d="M1.8 1.2l3.8 3.9-3.8 3.9" fill="none" stroke="#9a9a9a" stroke-width="1.7"/></svg>
<svg style="left:15px;top:656px" width="16" height="16" viewBox="0 0 16 16"><path d="M1.5 4.5v4M0.8 4.5h2" stroke="#707070" stroke-width="1"/><rect x="2.5" y="2.5" width="7.5" height="5.5" rx="1.2" fill="#f9e4ac" stroke="#c9a878"/><path d="M14.3 0v4.8q0 1.7-1.7 1.7h-1.3" fill="none" stroke="#3b5f8c" stroke-width="1.6"/><path d="M7 8.5h9" stroke="#2c3e70" stroke-width="1.2"/><rect x="7" y="9" width="3.2" height="5" fill="#a8c8f0"/><path d="M7.5 13.5h2.2" stroke="#2c4d84"/><rect x="0" y="8" width="7.5" height="8" fill="#d43a4a"/><path d="M2 10.2l3.5 3.6M5.5 10.2l-3.5 3.6" stroke="#fff" stroke-width="1.4"/><path d="M10.5 10.2v4.6q0 .9 2.5 .9t2.5-.9v-4.6" fill="#f6c646" stroke="#b98a2a"/><ellipse cx="13" cy="10.2" rx="2.5" ry="1" fill="#fbe08a" stroke="#b98a2a"/></svg>
<svg style="left:3px;top:678px" width="8" height="10" viewBox="0 0 8 10"><path d="M1.8 1.2l3.8 3.9-3.8 3.9" fill="none" stroke="#9a9a9a" stroke-width="1.7"/></svg>
<svg style="left:15px;top:674px" width="16" height="16" viewBox="0 0 16 16"><path d="M1.5 4.5v4M0.8 4.5h2" stroke="#707070" stroke-width="1"/><rect x="2.5" y="2.5" width="7.5" height="6" rx="1.2" fill="#f9e4ac" stroke="#c9a878"/><path d="M14.3 0v4.8q0 1.7-1.7 1.7h-1.3" fill="none" stroke="#3b5f8c" stroke-width="1.6"/><path d="M4 10.5h11.5l-3 4.5H2.5z" fill="#a9c9f3" stroke="#2f5fa8"/><path d="M1.5 8.5v6" stroke="#8a7a5a"/><path d="M3.3 8.8 Q3.8 8.5 4.2 9.2 L6.8 14.6 Q7 15.5 6 15.5 H0.6 Q-0.4 15.5 0 14.6 L2.5 9.2 Z" fill="#f7c95a" stroke="#c08a28" stroke-width=".9"/><path d="M3.4 10.6v2.4M3.4 13.8v1" stroke="#2a2a2a" stroke-width="1.3"/></svg>
<svg style="left:3px;top:696px" width="8" height="10" viewBox="0 0 8 10"><path d="M1.8 1.2l3.8 3.9-3.8 3.9" fill="none" stroke="#9a9a9a" stroke-width="1.7"/></svg>
<svg style="left:15px;top:692px" width="16" height="16" viewBox="0 0 16 16"><text x="0" y="5.6" font-family="Liberation Sans" font-weight="bold" font-size="6.5" fill="#2e5f9e">M</text><path d="M6.5 3.5l1.3 1.2-1.3 1.2" stroke="#c8a050" fill="none" stroke-width=".8"/><path d="M14.3 0v4.8q0 1.7-1.7 1.7h-1.3" fill="none" stroke="#3b5f8c" stroke-width="1.6"/><path d="M1.5 8.5V7h8" fill="#f9e3a8" stroke="#b8995a"/><path d="M1 8.7h15" stroke="#2c4d84" stroke-width="1.2"/><rect x="7.5" y="9.3" width="3" height="5.5" fill="#9cc0ee"/><path d="M3.3 8.8 Q3.8 8.5 4.2 9.2 L6.8 14.6 Q7 15.5 6 15.5 H0.6 Q-0.4 15.5 0 14.6 L2.5 9.2 Z" fill="#f7c95a" stroke="#c08a28" stroke-width=".9"/><path d="M3.4 10.6v2.4M3.4 13.8v1" stroke="#2a2a2a" stroke-width="1.3"/><path d="M10.5 10.2v4.6q0 .9 2.5 .9t2.5-.9v-4.6" fill="#f6c646" stroke="#b98a2a"/><ellipse cx="13" cy="10.2" rx="2.5" ry="1" fill="#fbe08a" stroke="#b98a2a"/></svg>
<svg style="left:3px;top:714px" width="8" height="10" viewBox="0 0 8 10"><path d="M1.8 1.2l3.8 3.9-3.8 3.9" fill="none" stroke="#9a9a9a" stroke-width="1.7"/></svg>
<svg style="left:15px;top:710px" width="16" height="16" viewBox="0 0 16 16"><path d="M1.5 4.5v4M0.8 4.5h2" stroke="#707070" stroke-width="1"/><rect x="2.5" y="2.5" width="7.5" height="6" rx="1.2" fill="#f9e4ac" stroke="#c9a878"/><path d="M14.3 0v4.8q0 1.7-1.7 1.7h-1.3" fill="none" stroke="#3b5f8c" stroke-width="1.6"/><path d="M4 10.5h11.5l-3 4.5H1.5z" fill="#a9c9f3" stroke="#2f5fa8"/><path d="M1.5 8.5v6.5" stroke="#2f5fa8"/></svg>
<svg style="left:417px;top:58px" width="16" height="16" viewBox="0 0 16 16"><path d="M3.5 1.5h7l3 3v10h-10z" fill="#eef3fa" stroke="#9a8658"/><path d="M10.5 1.5v3h3" fill="none" stroke="#9a8658"/><path d="M9.2 4.5v6q0 2-2 2h-1" fill="none" stroke="#3a6cae" stroke-width="1.8"/><path d="M3.3 8.8 Q3.8 8.5 4.2 9.2 L6.8 14.6 Q7 15.5 6 15.5 H0.6 Q-0.4 15.5 0 14.6 L2.5 9.2 Z" fill="#f7c95a" stroke="#c08a28" stroke-width=".9"/><path d="M3.4 10.6v2.4M3.4 13.8v1" stroke="#2a2a2a" stroke-width="1.3"/></svg>
<svg style="left:555px;top:62px" width="10" height="10" viewBox="0 0 10 10"><path d="M0.5 0.5H3.2L5 3.3 6.8 0.5H9.5V3.2L6.7 5 9.5 6.8V9.5H6.8L5 6.7 3.2 9.5H0.5V6.8L3.3 5 0.5 3.2Z" fill="#fff" stroke="#4a4a4a" stroke-width="1" stroke-linejoin="miter"/></svg>
<svg style="left:1607px;top:61px" width="11" height="4" viewBox="0 0 11 4"><rect x="0.5" y="0.5" width="10" height="2.5" fill="#fff" stroke="#404040" stroke-width="1"/></svg>
<svg style="left:451px;top:120px" width="10" height="10" viewBox="0 0 10 10"><circle cx="5" cy="5" r="4" fill="#dfe8f2" stroke="#9aaabb"/><path d="M2.8 5h4.4" stroke="#5a6a80" stroke-width="1.2"/></svg>
<svg style="left:466px;top:632px" width="8" height="10" viewBox="0 0 8 10"><path d="M6 1L2 5l4 4" fill="none" stroke="#b4b4b4" stroke-width="1.6"/></svg>
<svg style="left:1609px;top:632px" width="8" height="10" viewBox="0 0 8 10"><path d="M2 1l4 4-4 4" fill="none" stroke="#b4b4b4" stroke-width="1.6"/></svg>
<svg style="left:418px;top:656px" width="16" height="16" viewBox="0 0 16 16"><rect x="1" y="1.5" width="12" height="10" rx="1.5" fill="#fff" stroke="#36609e" stroke-width="2"/><path d="M3.5 5h4M3.5 7.5h6.5" stroke="#2a4a7e" stroke-width="1.1"/><path d="M2 13.5h10" stroke="#36609e" stroke-width="1.4"/><rect x="6" y="11.5" width="2" height="2" fill="#36609e"/></svg>
<svg style="left:489px;top:656px" width="16" height="16" viewBox="0 0 16 16"><rect x="1.5" y="1.5" width="11" height="13" fill="#f0f4fa" stroke="#7a8aa0"/><path d="M9.5 1.5h2l2 2v10" fill="none" stroke="#7a8aa0"/><circle cx="5.5" cy="5.5" r="2.3" fill="#e02030"/><circle cx="5.5" cy="12" r="2.3" fill="#f4b030"/><path d="M8.5 3v10" stroke="#a8c0e0" stroke-width="2"/></svg>
<svg style="left:569px;top:656px" width="16" height="16" viewBox="0 0 16 16"><path d="M4.5 5.5h9l2 2v8h-11z" fill="#f4f6fa" stroke="#8a98a8" stroke-dasharray="1.5 1"/><circle cx="6" cy="6" r="5.2" fill="#e03844" stroke="#b02030" stroke-width=".8"/><path d="M4 4l4 4M8 4l-4 4" stroke="#fff" stroke-width="1.4"/><path d="M11 14l3-3" stroke="#e0c060"/></svg>
<svg style="left:649px;top:656px" width="16" height="16" viewBox="0 0 16 16"><path d="M2.5 1.5h10v12.5l-2 1.5h-8z" fill="#f4f8fa" stroke="#8a9070"/><path d="M3 0.8h9" stroke="#505050" stroke-dasharray="1 1"/><path d="M8.5 4.5v6q0 2-2 2h-1" fill="none" stroke="#2a5aa0" stroke-width="1.6"/><path d="M10.5 15.5l2-2.5" stroke="#40a040"/></svg>
<svg style="left:740px;top:656px" width="16" height="16" viewBox="0 0 16 16"><path d="M13.5 0.5l2 2-1 4-6 6-3.5-3.5 6-6z" fill="#fbe6a0" stroke="#c89a40"/><path d="M5 9l3.5 3.5-2.5 2.5L2.5 11.5z" fill="#a08878" stroke="#806050" stroke-width=".6"/><path d="M2.5 11.5L6 15l-1.5 1L1 13z" fill="#fff5c0" stroke="#e0d090" stroke-width=".6"/><circle cx="12.2" cy="3.8" r=".8" fill="#806040"/></svg>
<svg style="left:804px;top:656px" width="16" height="16" viewBox="0 0 16 16"><rect x="4.5" y="0.5" width="10" height="8" fill="#1a3aa0" stroke="#707070"/><rect x="6" y="2" width="7" height="5" fill="#2a60e0"/><path d="M5 9h9l1.5 2h-12z" fill="#a8a8a8" stroke="#606060" stroke-width=".7"/><path d="M1 12q2-2 4 0t3 2" fill="none" stroke="#707070" stroke-width="1.2"/><path d="M0.5 15.5l3-3" stroke="#505050"/></svg>
<svg style="left:877px;top:656px" width="16" height="16" viewBox="0 0 16 16"><path d="M1.5 9.5v5.5h13v-5.5" fill="none" stroke="#4a80b8" stroke-width="1.2"/><path d="M3.5 12.5h9" stroke="#4a80b8"/><path d="M6 0.5h4v5h3l-5 5-5-5h3z" fill="#3aa84a" stroke="#1e7a2e" stroke-linejoin="round"/></svg>
<svg style="left:966px;top:656px" width="16" height="16" viewBox="0 0 16 16"><path d="M0.5 15.5V3.5h3l1-1.5h4v1.5h6v12z" fill="#f7cf5a" stroke="#b8852c"/><rect x="2" y="9" width="12" height="6" fill="#fff" stroke="#888" stroke-width=".6"/><text x="3.2" y="14.3" font-family="Liberation Sans" font-size="5.2" font-weight="bold" fill="#2a2a2a">GIT</text><rect x="9" y="0.5" width="5" height="4" fill="#f7cf5a" stroke="#b8852c"/></svg>
<svg style="left:1099px;top:656px" width="16" height="16" viewBox="0 0 16 16"><path d="M5.5 0.5h6v11h-6z" fill="#f8e08a" stroke="#b8952c"/><path d="M3.5 2.5h6v11h-6z" fill="#f8e8b0" stroke="#b8952c"/><path d="M1.5 5.5h7v10h-7z" fill="#f0f4fa" stroke="#7a8aa0"/><path d="M3 8h4M3 10h4M3 12h4M3 14h3" stroke="#5a7ab0"/></svg>
<svg style="left:1166px;top:656px" width="16" height="16" viewBox="0 0 16 16"><rect x="1" y="1.5" width="12" height="10" rx="1.5" fill="#fff" stroke="#36609e" stroke-width="2"/><path d="M3.5 5h4M3.5 7.5h6.5" stroke="#2a4a7e" stroke-width="1.1"/><path d="M2 13.5h10" stroke="#36609e" stroke-width="1.4"/><rect x="6" y="11.5" width="2" height="2" fill="#36609e"/></svg>
<svg style="left:1076px;top:660px" width="10" height="10" viewBox="0 0 10 10"><path d="M0.5 0.5H3.2L5 3.3 6.8 0.5H9.5V3.2L6.7 5 9.5 6.8V9.5H6.8L5 6.7 3.2 9.5H0.5V6.8L3.3 5 0.5 3.2Z" fill="#fff" stroke="#4a4a4a" stroke-width="1" stroke-linejoin="miter"/></svg>
<svg style="left:1375px;top:656px" width="16" height="16" viewBox="0 0 16 16"><path d="M0.5 10.5v-9h9" fill="none" stroke="#8aa0c0"/><rect x="2.5" y="3.5" width="9" height="9" fill="#eef4fc" stroke="#5a7aa8"/><path d="M4.5 8h5" stroke="#203a70" stroke-width="1.4"/></svg>
<svg style="left:1405px;top:656px" width="16" height="16" viewBox="0 0 16 16"><path d="M0.5 10.5V3.5h3l1-1.5h4v1.5h3v7z" fill="#fbe0a0" stroke="#b8852c"/><path d="M8.5 7v7q0 1.5 3.5 1.5t3.5-1.5V7" fill="#f6d254" stroke="#b99030"/><ellipse cx="12" cy="7" rx="3.5" ry="1.4" fill="#fce79a" stroke="#b99030"/></svg>
<svg style="left:1428px;top:656px" width="16" height="16" viewBox="0 0 16 16"><path d="M1.5 8v-4h3l1-1.5h4v5.5" fill="#fbe0a0" stroke="#b8852c"/><path d="M8.5 6v8q0 1.5 3.5 1.5t3.5-1.5V6" fill="#f6d254" stroke="#b99030"/><ellipse cx="12" cy="6" rx="3.5" ry="1.4" fill="#fce79a" stroke="#b99030"/><path d="M9 12H4.5V10L1.5 12.5 4.5 15v-2H9z" fill="#50b850" stroke="#2a8a2a" stroke-width=".8"/></svg>
<svg style="left:1451px;top:656px" width="16" height="16" viewBox="0 0 16 16"><path d="M1.5 6v8q0 1.5 3.5 1.5t3.5-1.5V6" fill="#f6d254" stroke="#b99030"/><ellipse cx="5" cy="6" rx="3.5" ry="1.4" fill="#fce79a" stroke="#b99030"/><path d="M12 0.5v6.5M8.8 3.7h6.5" stroke="#c89028" stroke-width="3"/><path d="M12 1.3v4.8M9.6 3.7h4.8" stroke="#fff2b8" stroke-width="1.2"/></svg>
<svg style="left:1482px;top:656px" width="16" height="16" viewBox="0 0 16 16"><path d="M3 8.5q0-5 5.5-5.5V1l3.5 3-3.5 3V5q-3 .5-3.5 3.5z" fill="#fde69a" stroke="#c48a20" stroke-linejoin="round"/><path d="M13 7.5q0 5-5.5 5.5V15L4 12l3.5-3v2q3-.5 3.5-3.5z" fill="#fde69a" stroke="#c48a20" stroke-linejoin="round"/></svg>
<svg style="left:1505px;top:656px" width="16" height="16" viewBox="0 0 16 16"><path d="M6.5 0.8L1 4.5l5.5 3.7V6.2h6.5V2.8H6.5z" fill="#fde69a" stroke="#c48a20" stroke-linejoin="round"/><path d="M9.5 7.8l5.5 3.7-5.5 3.7v-2H3v-3.4h6.5z" fill="#fde69a" stroke="#c48a20" stroke-linejoin="round"/></svg>
<svg style="left:1538px;top:656px" width="16" height="16" viewBox="0 0 16 16"><path d="M2 1.5v12M2 6.5h3M2 12.5h3" stroke="#6a80a8"/><rect x="0.5" y="0.5" width="3" height="2.5" fill="#a8c0e0" stroke="#5a70a0" stroke-width=".7"/><rect x="5" y="5.5" width="2.5" height="2" fill="#a8c0e0" stroke="#5a70a0" stroke-width=".7"/><rect x="5" y="11.5" width="2.5" height="2" fill="#a8c0e0" stroke="#5a70a0" stroke-width=".7"/><path d="M6 2h5M9 6.5h4M9 12.5h4M5 9.5h6" stroke="#8aa0c0"/></svg>
<svg style="left:1396px;top:654px" width="2" height="18" viewBox="0 0 2 18"><rect x="0" y="0" width="1.2" height="18" fill="#8a8a8a"/></svg>
<svg style="left:1473px;top:654px" width="2" height="18" viewBox="0 0 2 18"><rect x="0" y="0" width="1.2" height="18" fill="#8a8a8a"/></svg>
<svg style="left:1527px;top:654px" width="2" height="18" viewBox="0 0 2 18"><rect x="0" y="0" width="1.2" height="18" fill="#8a8a8a"/></svg>
<div class="a" style="left:1556px;top:652px;width:23px;height:21px;background:#cce2f6;border:1px solid #a6c9ec"></div>
<svg style="left:1560px;top:655px" width="16" height="16" viewBox="0 0 16 16"><path d="M4.5 1.5h8l3 3v11h-11z" fill="#f4f6fa" stroke="#8a98a8"/><path d="M9 7h5M9 9h5M9 11h5M7 13h7" stroke="#6a88b8" stroke-width=".8"/><path d="M0 13.5L4.5 3.5l4.5 10z" fill="none" stroke="#2a5aa0" stroke-width="1.6"/><path d="M2.5 10h4" stroke="#2a5aa0" stroke-width="1.2"/></svg>
<svg style="left:1589px;top:656px" width="4" height="13" viewBox="0 0 4 13"><circle cx="2" cy="2" r="1.6" fill="#fff" stroke="#404040" stroke-width="1"/><circle cx="2" cy="7" r="1.6" fill="#fff" stroke="#404040" stroke-width="1"/><circle cx="2" cy="12" r="1.6" fill="#fff" stroke="#404040" stroke-width="1"/></svg>
<svg style="left:1607px;top:658px" width="11" height="4" viewBox="0 0 11 4"><rect x="0.5" y="0.5" width="10" height="2.5" fill="#fff" stroke="#404040" stroke-width="1"/></svg>
<svg style="left:419px;top:681px" width="8" height="10" viewBox="0 0 8 10"><path d="M1.8 1.2l3.8 3.9-3.8 3.9" fill="none" stroke="#9a9a9a" stroke-width="1.7"/></svg>
<svg style="left:433px;top:677px" width="16" height="16" viewBox="0 0 16 16"><path d="M3.5 3v10.5q0 1.5 4 1.5t4-1.5V3" fill="#f6d254" stroke="#b99030"/><ellipse cx="7.5" cy="3" rx="4" ry="1.8" fill="#fce79a" stroke="#b99030"/><path d="M5.5 5v8" stroke="#fff4c0" stroke-width="1"/></svg>
<svg style="left:419px;top:699px" width="8" height="10" viewBox="0 0 8 10"><path d="M1.8 1.2l3.8 3.9-3.8 3.9" fill="none" stroke="#9a9a9a" stroke-width="1.7"/></svg>
<svg style="left:433px;top:695px" width="16" height="16" viewBox="0 0 16 16"><path d="M3.5 3v10.5q0 1.5 4 1.5t4-1.5V3" fill="#f6d254" stroke="#b99030"/><ellipse cx="7.5" cy="3" rx="4" ry="1.8" fill="#fce79a" stroke="#b99030"/><path d="M5.5 5v8" stroke="#fff4c0" stroke-width="1"/></svg>
<svg style="left:419px;top:717px" width="8" height="10" viewBox="0 0 8 10"><path d="M1.8 1.2l3.8 3.9-3.8 3.9" fill="none" stroke="#9a9a9a" stroke-width="1.7"/></svg>
<svg style="left:433px;top:713px" width="16" height="16" viewBox="0 0 16 16"><path d="M3.5 3v10.5q0 1.5 4 1.5t4-1.5V3" fill="#f6d254" stroke="#b99030"/><ellipse cx="7.5" cy="3" rx="4" ry="1.8" fill="#fce79a" stroke="#b99030"/><path d="M5.5 5v8" stroke="#fff4c0" stroke-width="1"/></svg>
<svg style="left:419px;top:735px" width="8" height="10" viewBox="0 0 8 10"><path d="M1.8 1.2l3.8 3.9-3.8 3.9" fill="none" stroke="#9a9a9a" stroke-width="1.7"/></svg>
<svg style="left:433px;top:731px" width="16" height="16" viewBox="0 0 16 16"><path d="M3.5 3v10.5q0 1.5 4 1.5t4-1.5V3" fill="#f6d254" stroke="#b99030"/><ellipse cx="7.5" cy="3" rx="4" ry="1.8" fill="#fce79a" stroke="#b99030"/><path d="M5.5 5v8" stroke="#fff4c0" stroke-width="1"/></svg>
</body></html>
